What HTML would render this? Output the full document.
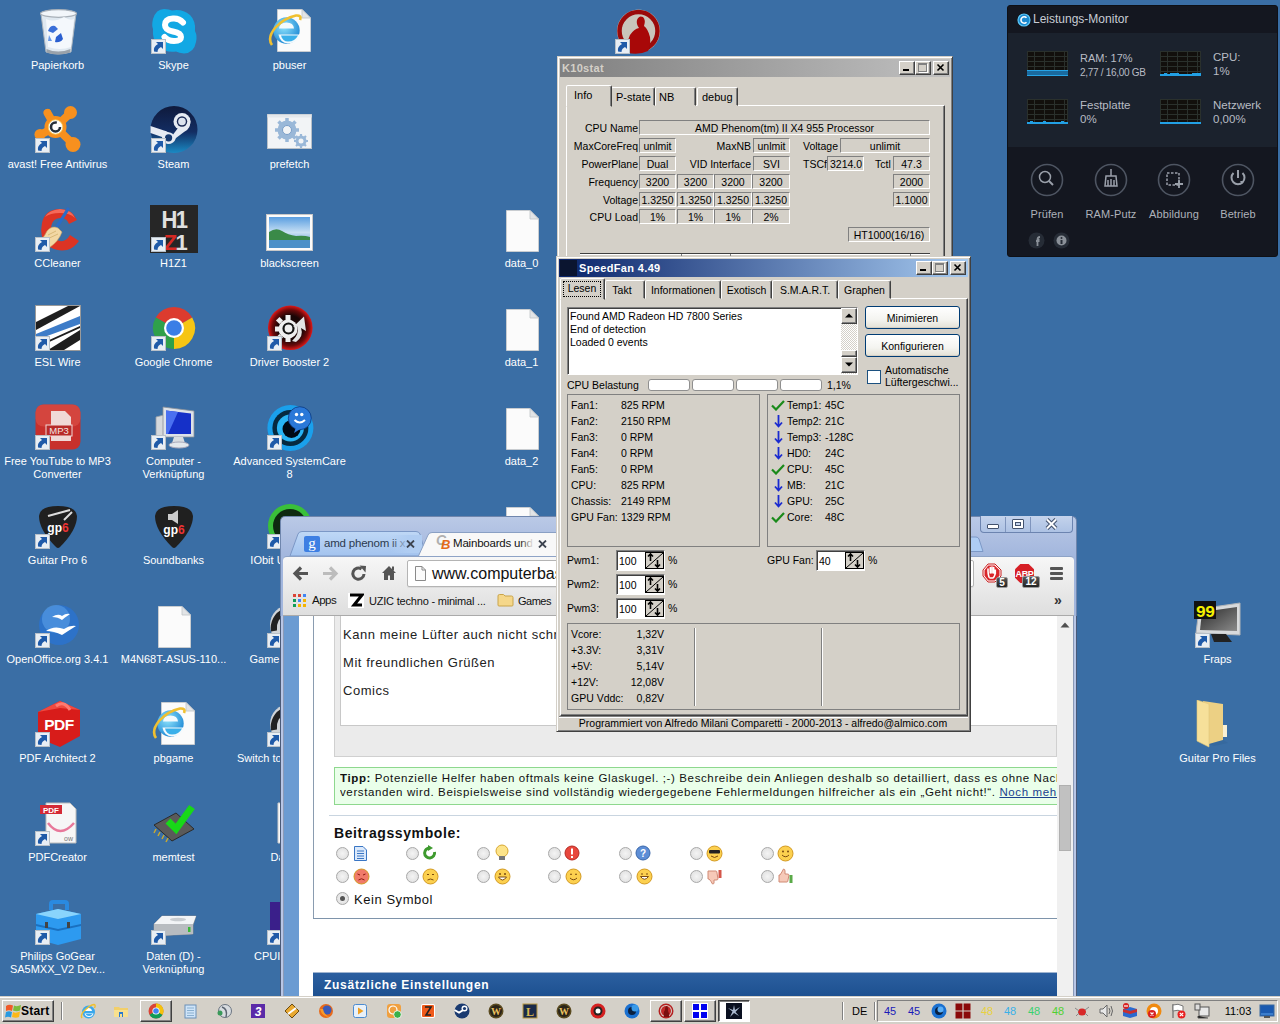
<!DOCTYPE html><html><head><meta charset="utf-8"><style>
*{box-sizing:border-box}
html,body{margin:0;padding:0}
body{width:1280px;height:1024px;overflow:hidden;position:relative;background:#3a6ea5;font-family:"Liberation Sans",sans-serif;font-size:11px;color:#000}
div,span,svg{position:absolute;white-space:nowrap}
.raised{background:#d4d0c8;border:1px solid;border-color:#fff #404040 #404040 #fff;box-shadow:inset -1px -1px 0 #808080}
.sunk{border:1px solid;border-color:#808080 #fff #fff #808080}
.sunk2{border:1px solid;border-color:#808080 #fff #fff #808080;box-shadow:inset 1px 1px 0 #404040}
.win{background:#d4d0c8;border:1px solid;border-color:#d4d0c8 #404040 #404040 #d4d0c8;box-shadow:inset 1px 1px 0 #fff, inset -1px -1px 0 #808080}
.tb{width:16px;height:14px}
.k{font-size:10.5px}
</style></head><body><svg style="left:33.5px;top:7px" width="48" height="48" viewBox="0 0 48 48"><path d="M7 7 Q24 3 42 7 L37 45 Q24 49 12 45Z" fill="#dfe8f0" stroke="#aab4be"/><ellipse cx="24.5" cy="6.5" rx="18" ry="3.8" fill="#f2f6fa" stroke="#a8b0b8" stroke-width="1.2"/><path d="M12 12 Q20 16 30 10 Q36 14 40 12 L37 40 Q26 44 14 40Z" fill="#f4f8fc"/><path d="M14 24 Q16 18 21 19 L24 22 L19 26Z" fill="#3a6fd8"/><path d="M22 30 L27 26 L29 32 Q26 36 21 35Z" fill="#2a5fd0"/><path d="M15 28 L18 34 L14 34Z" fill="#6a9ae8"/><path d="M12.5 42 Q24 47 36.5 42 L36 45.5 Q24 49.5 12.5 45.5Z" fill="#9aa2aa"/></svg><div style="left:-142.5px;width:400px;text-align:center;top:59.69px;font-size:11px;line-height:11px;color:#fff">Papierkorb</div><svg style="left:33.5px;top:106px" width="48" height="48" viewBox="0 0 48 48"><g stroke="#f7901e" stroke-width="8" stroke-linecap="round"><path d="M21.5 21 L36.5 7 M21.5 21 L39 38 M21.5 21 L6 29 M21.5 21 L13.5 7"/></g><g fill="#f7901e"><circle cx="21.5" cy="21" r="11"/><circle cx="36.5" cy="6.5" r="6.5"/><circle cx="39" cy="38.5" r="7.5"/><circle cx="6" cy="28.5" r="5.5"/><circle cx="13.5" cy="6.5" r="3.5"/></g><circle cx="21.5" cy="21" r="7.2" fill="#fff" stroke="#f8d060" stroke-width=".8"/><circle cx="21.5" cy="21" r="4.5" fill="none" stroke="#26303a" stroke-width="2.6" stroke-dasharray="22 6"/><g transform="translate(1,32)"><rect x="0.5" y="0.5" width="14" height="14" fill="#e8eef4" stroke="#b8c0c8"/><path d="M3 12.5 Q2 7.5 7 5 L5 3 H12 V10 L10 8 Q6.5 9.5 6.5 13Z" fill="#1f5aa8"/></g></svg><div style="left:-142.5px;width:400px;text-align:center;top:158.69px;font-size:11px;line-height:11px;color:#fff">avast! Free Antivirus</div><svg style="left:33.5px;top:205px" width="48" height="48" viewBox="0 0 48 48"><path d="M43 15 Q38 4 26 4 Q11 4 8 18 Q5 32 13 40 Q21 47 33 45 Q40 43 45 36 L36 30 Q32 37 26 36 Q17 35 17 25 Q17 13 27 13 Q33 13 35 19Z" fill="#dc3424"/><path d="M26 4 Q15 5 11 12 Q16 8 26 8 Q36 8 41 13 Q38 5 26 4Z" fill="#ff8070" opacity=".7"/><path d="M34 4 L21 25" stroke="#2a6cc8" stroke-width="3.2" stroke-linecap="round"/><path d="M13 26 Q18 20 24 23 L28 27 Q25 36 15 43 Q8 41 5 36 Q10 33 13 26Z" fill="#f2d8a4" stroke="#c8a060" stroke-width=".6"/><path d="M14 30 L22 26 M11 35 L24 29" stroke="#d8b878" stroke-width="1"/><g transform="translate(1,32)"><rect x="0.5" y="0.5" width="14" height="14" fill="#e8eef4" stroke="#b8c0c8"/><path d="M3 12.5 Q2 7.5 7 5 L5 3 H12 V10 L10 8 Q6.5 9.5 6.5 13Z" fill="#1f5aa8"/></g></svg><div style="left:-142.5px;width:400px;text-align:center;top:257.69px;font-size:11px;line-height:11px;color:#fff">CCleaner</div><svg style="left:33.5px;top:304px" width="48" height="48" viewBox="0 0 48 48"><rect x="1.5" y="1.5" width="45" height="45" fill="#fff" stroke="#9a9a9a"/><path d="M2 26 L46 2 H34 L2 18Z" fill="#1e1e1e"/><path d="M2 30 L46 12 V20 L2 36Z" fill="#3d7cc8"/><path d="M14 46 L46 26 V36 L30 46Z M2 42 L46 22 V24 L2 44Z" fill="#1e1e1e"/><g transform="translate(1,32)"><rect x="0.5" y="0.5" width="14" height="14" fill="#e8eef4" stroke="#b8c0c8"/><path d="M3 12.5 Q2 7.5 7 5 L5 3 H12 V10 L10 8 Q6.5 9.5 6.5 13Z" fill="#1f5aa8"/></g></svg><div style="left:-142.5px;width:400px;text-align:center;top:356.69px;font-size:11px;line-height:11px;color:#fff">ESL Wire</div><svg style="left:33.5px;top:403px" width="48" height="48" viewBox="0 0 48 48"><rect x="1.5" y="1.5" width="45" height="45" rx="8" fill="#c8302c"/><rect x="1.5" y="1.5" width="45" height="22" rx="8" fill="#e05a50" opacity=".5"/><path d="M17 8 H31 L37 14 V38 H17Z" fill="#f0d8d6"/><rect x="12" y="22" width="26" height="11" fill="#b82a28" stroke="#f0d8d6" stroke-width="1"/><text x="25" y="31" font-size="9.5" fill="#f4e4e2" text-anchor="middle" font-family="Liberation Sans">MP3</text><g transform="translate(1,32)"><rect x="0.5" y="0.5" width="14" height="14" fill="#e8eef4" stroke="#b8c0c8"/><path d="M3 12.5 Q2 7.5 7 5 L5 3 H12 V10 L10 8 Q6.5 9.5 6.5 13Z" fill="#1f5aa8"/></g></svg><div style="left:-142.5px;width:400px;text-align:center;top:455.69px;font-size:11px;line-height:11px;color:#fff">Free YouTube to MP3</div><div style="left:-142.5px;width:400px;text-align:center;top:468.69px;font-size:11px;line-height:11px;color:#fff">Converter</div><svg style="left:33.5px;top:502px" width="48" height="48" viewBox="0 0 48 48"><path d="M24 4 Q42 4 43 14 Q43 28 26 45 Q24 47 22 45 Q5 28 5 14 Q6 4 24 4Z" fill="#202020"/><text x="24" y="30" font-size="12" font-weight="bold" fill="#fff" text-anchor="middle" font-family="Liberation Sans">gp<tspan fill="#e33">6</tspan></text><path d="M14 14 L36 8 M30 18 L38 10" stroke="#ddd" stroke-width="2"/><g transform="translate(1,32)"><rect x="0.5" y="0.5" width="14" height="14" fill="#e8eef4" stroke="#b8c0c8"/><path d="M3 12.5 Q2 7.5 7 5 L5 3 H12 V10 L10 8 Q6.5 9.5 6.5 13Z" fill="#1f5aa8"/></g></svg><div style="left:-142.5px;width:400px;text-align:center;top:554.69px;font-size:11px;line-height:11px;color:#fff">Guitar Pro 6</div><svg style="left:33.5px;top:601px" width="48" height="48" viewBox="0 0 48 48"><circle cx="25" cy="24" r="20" fill="#2d72c8"/><circle cx="22" cy="18" r="14" fill="#5aa0e8" opacity=".6"/><path d="M12 30 Q20 24 30 28 Q36 24 42 25 Q34 30 28 34 Q20 30 12 30Z" fill="#fff"/><path d="M18 16 Q24 12 28 15 Q32 12 36 13 Q30 17 28 19 Q24 16 18 16Z" fill="#fff"/><g transform="translate(1,32)"><rect x="0.5" y="0.5" width="14" height="14" fill="#e8eef4" stroke="#b8c0c8"/><path d="M3 12.5 Q2 7.5 7 5 L5 3 H12 V10 L10 8 Q6.5 9.5 6.5 13Z" fill="#1f5aa8"/></g></svg><div style="left:-142.5px;width:400px;text-align:center;top:653.69px;font-size:11px;line-height:11px;color:#fff">OpenOffice.org 3.4.1</div><svg style="left:33.5px;top:700px" width="48" height="48" viewBox="0 0 48 48"><path d="M26 1 L46 10 V36 L26 47 L4 38 V12Z" fill="#d81c1a"/><path d="M4 12 L26 1 L46 10 L26 8Z" fill="#f04a40"/><path d="M22 6 Q30 0 36 10" stroke="#ff7a70" stroke-width="3" fill="none"/><text x="25" y="30" font-size="15.5" font-weight="bold" fill="#fff" text-anchor="middle" font-family="Liberation Sans" letter-spacing="-0.5">PDF</text><g transform="translate(1,32)"><rect x="0.5" y="0.5" width="14" height="14" fill="#e8eef4" stroke="#b8c0c8"/><path d="M3 12.5 Q2 7.5 7 5 L5 3 H12 V10 L10 8 Q6.5 9.5 6.5 13Z" fill="#1f5aa8"/></g></svg><div style="left:-142.5px;width:400px;text-align:center;top:752.69px;font-size:11px;line-height:11px;color:#fff">PDF Architect 2</div><svg style="left:33.5px;top:799px" width="48" height="48" viewBox="0 0 48 48"><path d="M12 4 H36 L42 10 V44 H12Z" fill="#f6f6f6" stroke="#bbb"/><rect x="6" y="6" width="22" height="9" fill="#d42a36"/><text x="17" y="14" font-size="8" fill="#fff" text-anchor="middle" font-weight="bold" font-family="Liberation Sans">PDF</text><path d="M14 24 Q26 40 40 24" stroke="#e8789a" stroke-width="2.5" fill="none"/><text x="30" y="42" font-size="7" fill="#777" font-family="Liberation Sans">ow</text><g transform="translate(1,32)"><rect x="0.5" y="0.5" width="14" height="14" fill="#e8eef4" stroke="#b8c0c8"/><path d="M3 12.5 Q2 7.5 7 5 L5 3 H12 V10 L10 8 Q6.5 9.5 6.5 13Z" fill="#1f5aa8"/></g></svg><div style="left:-142.5px;width:400px;text-align:center;top:851.69px;font-size:11px;line-height:11px;color:#fff">PDFCreator</div><svg style="left:33.5px;top:898px" width="48" height="48" viewBox="0 0 48 48"><path d="M15 12 V6 Q15 2 19 2 H31 Q35 2 35 6 V12 H31 V6 H19 V12Z" fill="#2a8ae0"/><path d="M2 16 L24 11 L47 16 V41 L24 47 L2 41Z" fill="#2d9af0"/><path d="M2 16 L24 11 L47 16 L24 21Z" fill="#8ad4fc"/><path d="M2 26 L24 31 L47 26 V28 L24 33 L2 28Z" fill="#1a70c0"/><rect x="11" y="24" width="3" height="6" fill="#444"/><rect x="33" y="24" width="3" height="6" fill="#444"/><g transform="translate(1,32)"><rect x="0.5" y="0.5" width="14" height="14" fill="#e8eef4" stroke="#b8c0c8"/><path d="M3 12.5 Q2 7.5 7 5 L5 3 H12 V10 L10 8 Q6.5 9.5 6.5 13Z" fill="#1f5aa8"/></g></svg><div style="left:-142.5px;width:400px;text-align:center;top:950.69px;font-size:11px;line-height:11px;color:#fff">Philips GoGear</div><div style="left:-142.5px;width:400px;text-align:center;top:963.69px;font-size:11px;line-height:11px;color:#fff">SA5MXX_V2 Dev...</div><svg style="left:149.5px;top:7px" width="48" height="48" viewBox="0 0 48 48"><path d="M14 2 Q19 2 22 3.5 Q32 1.5 40 8 Q46 14 45 24 Q47.5 29 46 35 Q44 46 34 46.5 Q29 46 26 44.5 Q15 46 8 39 Q2 32 3 22 Q1.5 18 3 12 Q6 2 14 2Z" fill="#12a8e4"/><path d="M33 15.5 Q29 11 23 11.5 Q15 12 15 18 Q15 23 23 24.5 Q31 26 31 30 Q31 34 24 34 Q18 34 14.5 30" stroke="#fff" stroke-width="6" fill="none" stroke-linecap="round"/><g transform="translate(1,32)"><rect x="0.5" y="0.5" width="14" height="14" fill="#e8eef4" stroke="#b8c0c8"/><path d="M3 12.5 Q2 7.5 7 5 L5 3 H12 V10 L10 8 Q6.5 9.5 6.5 13Z" fill="#1f5aa8"/></g></svg><div style="left:-26.5px;width:400px;text-align:center;top:59.69px;font-size:11px;line-height:11px;color:#fff">Skype</div><svg style="left:149.5px;top:106px" width="48" height="48" viewBox="0 0 48 48"><defs><linearGradient id="stg" x1="0" y1="0" x2="0" y2="1"><stop offset="0" stop-color="#0f1a3c"/><stop offset=".55" stop-color="#132d62"/><stop offset="1" stop-color="#1a8ac4"/></linearGradient></defs><circle cx="24" cy="23.5" r="23.5" fill="url(#stg)"/><path d="M0.5 20 L14 24.5 Q19 25.5 22 30 L28 22 Q26 12 33 8 L40 12 Q42 22 34 26 L26 32 Q24 38 18 38 Q12 37 12 31 L0.5 27Z" fill="#e6ebf3"/><circle cx="32" cy="15.5" r="8.5" fill="#e6ebf3"/><circle cx="32" cy="15.5" r="5.2" fill="#1b2a55"/><circle cx="32" cy="15.5" r="3.8" fill="#dce3ee"/><circle cx="18.6" cy="31.8" r="5.6" fill="#e6ebf3"/><circle cx="18.6" cy="31.8" r="3.6" fill="#163a70"/><g transform="translate(1,32)"><rect x="0.5" y="0.5" width="14" height="14" fill="#e8eef4" stroke="#b8c0c8"/><path d="M3 12.5 Q2 7.5 7 5 L5 3 H12 V10 L10 8 Q6.5 9.5 6.5 13Z" fill="#1f5aa8"/></g></svg><div style="left:-26.5px;width:400px;text-align:center;top:158.69px;font-size:11px;line-height:11px;color:#fff">Steam</div><svg style="left:149.5px;top:205px" width="48" height="48" viewBox="0 0 48 48"><rect x="0" y="0" width="48" height="48" fill="#262626"/><text x="24" y="22" font-size="22" font-weight="bold" fill="#e0e0e0" text-anchor="middle" font-family="Liberation Sans" letter-spacing="-1.5" transform="scale(1,1.05)">H1</text><text x="25" y="45" font-size="22" font-weight="bold" fill="#d42a24" text-anchor="middle" font-family="Liberation Sans" letter-spacing="-1.5">Z<tspan fill="#e0e0e0">1</tspan></text><g transform="translate(1,32)"><rect x="0.5" y="0.5" width="14" height="14" fill="#e8eef4" stroke="#b8c0c8"/><path d="M3 12.5 Q2 7.5 7 5 L5 3 H12 V10 L10 8 Q6.5 9.5 6.5 13Z" fill="#1f5aa8"/></g></svg><div style="left:-26.5px;width:400px;text-align:center;top:257.69px;font-size:11px;line-height:11px;color:#fff">H1Z1</div><svg style="left:149.5px;top:304px" width="48" height="48" viewBox="0 0 48 48"><path d="M24 24 L5.8 13.5 A21 21 0 0 1 42.2 13.5Z" fill="#dc3b2e"/><path d="M24 24 L42.2 13.5 A21 21 0 0 1 24 45Z" fill="#f6c514"/><path d="M24 24 L24 45 A21 21 0 0 1 5.8 13.5Z" fill="#2fa04a"/><circle cx="24" cy="24" r="10" fill="#fff"/><circle cx="24" cy="24" r="7.8" fill="#3a7ee6"/><g transform="translate(1,32)"><rect x="0.5" y="0.5" width="14" height="14" fill="#e8eef4" stroke="#b8c0c8"/><path d="M3 12.5 Q2 7.5 7 5 L5 3 H12 V10 L10 8 Q6.5 9.5 6.5 13Z" fill="#1f5aa8"/></g></svg><div style="left:-26.5px;width:400px;text-align:center;top:356.69px;font-size:11px;line-height:11px;color:#fff">Google Chrome</div><svg style="left:149.5px;top:403px" width="48" height="48" viewBox="0 0 48 48"><path d="M6 14 L14 12 V34 L6 36Z" fill="#d4d8dc" stroke="#9aa0a6" stroke-width=".8"/><path d="M13 4 L44 8 V34 L13 34Z" fill="#dde2e8" stroke="#8a9098" stroke-width=".8"/><path d="M16 7.5 L41 10.5 V31 L16 31Z" fill="#1530c8"/><path d="M16 7.5 L28 9 L18 31 H16Z" fill="#4a70f0"/><path d="M24 34 H33 L35 40 H22Z" fill="#d8dce0"/><ellipse cx="29" cy="42" rx="10" ry="3" fill="#e4e8ec" stroke="#aab"/><g transform="translate(1,32)"><rect x="0.5" y="0.5" width="14" height="14" fill="#e8eef4" stroke="#b8c0c8"/><path d="M3 12.5 Q2 7.5 7 5 L5 3 H12 V10 L10 8 Q6.5 9.5 6.5 13Z" fill="#1f5aa8"/></g></svg><div style="left:-26.5px;width:400px;text-align:center;top:455.69px;font-size:11px;line-height:11px;color:#fff">Computer -</div><div style="left:-26.5px;width:400px;text-align:center;top:468.69px;font-size:11px;line-height:11px;color:#fff">Verknüpfung</div><svg style="left:149.5px;top:502px" width="48" height="48" viewBox="0 0 48 48"><path d="M24 4 Q42 4 43 14 Q43 28 26 45 Q24 47 22 45 Q5 28 5 14 Q6 4 24 4Z" fill="#202020"/><text x="24" y="32" font-size="12" font-weight="bold" fill="#fff" text-anchor="middle" font-family="Liberation Sans">gp<tspan fill="#e33">6</tspan></text><path d="M18 12 H22 L28 8 V22 L22 18 H18Z" fill="#ccc"/></svg><div style="left:-26.5px;width:400px;text-align:center;top:554.69px;font-size:11px;line-height:11px;color:#fff">Soundbanks</div><svg style="left:149.5px;top:601px" width="48" height="48" viewBox="0 0 48 48"><path d="M8.5 5.5 H32 L40.5 14 V46.5 H8.5Z" fill="#fbfbfb" stroke="#c8ccd0"/><path d="M32 5.5 V14 H40.5Z" fill="#e2e4e6" stroke="#c0c4c8" stroke-width=".8"/></svg><div style="left:-26.5px;width:400px;text-align:center;top:653.69px;font-size:11px;line-height:11px;color:#fff">M4N68T-ASUS-110...</div><svg style="left:149.5px;top:700px" width="48" height="48" viewBox="0 0 48 48"><path d="M11.5 2.5 H36 L44.5 11 V44.5 H11.5Z" fill="#fbfbfb" stroke="#c8ccd0"/><path d="M36 2.5 V11 H44.5Z" fill="#e2e4e6" stroke="#c0c4c8" stroke-width=".8"/><defs><radialGradient id="ieg" cx=".4" cy=".35" r=".7"><stop offset="0" stop-color="#8fe4fc"/><stop offset="1" stop-color="#1b86d4"/></radialGradient></defs><circle cx="20.5" cy="23.5" r="13.2" fill="url(#ieg)"/><path d="M13 21.5 Q13.5 15.5 20.5 15.5 Q27.5 15.5 28 21.5Z" fill="#f4fafd"/><path d="M12.5 27.5 H34 Q32 36 22 36.5 Q14 36 12.5 27.5Z" fill="#f4fafd"/><path d="M15 28.5 H32 Q29 34.5 22 34.5 Q16.5 34.5 15 28.5Z" fill="#3ab0ea"/><path d="M6 38 Q1 31 9 21 Q18 11 30 8.5 Q36 8 34 13" stroke="#f0c030" stroke-width="2.6" fill="none"/></svg><div style="left:-26.5px;width:400px;text-align:center;top:752.69px;font-size:11px;line-height:11px;color:#fff">pbgame</div><svg style="left:149.5px;top:799px" width="48" height="48" viewBox="0 0 48 48"><path d="M4 26 L26 14 L44 30 L22 42Z" fill="#5a5a5a" stroke="#2a2a2a"/><path d="M6 30 L4 34 M10 33 L8 37 M14 36 L12 40 M18 39 L16 43" stroke="#c8a830" stroke-width="1.5"/><path d="M18 22 L26 30 L42 8" stroke="#18d818" stroke-width="7" fill="none"/></svg><div style="left:-26.5px;width:400px;text-align:center;top:851.69px;font-size:11px;line-height:11px;color:#fff">memtest</div><svg style="left:149.5px;top:898px" width="48" height="48" viewBox="0 0 48 48"><path d="M4 26 L12 18 H46 L43 27 V36 L4 38Z" fill="#e0e2e4" stroke="#8a8e92" stroke-width=".8"/><path d="M4 26 H43 V36 L4 38Z" fill="#b8bcc0"/><path d="M12 18 H46 L43 26 H4Z" fill="#f2f4f6"/><ellipse cx="28" cy="21.5" rx="8" ry="1.8" fill="#c8ccd0"/><rect x="38" y="29" width="2.5" height="5" fill="#3ab83a"/><g transform="translate(1,32)"><rect x="0.5" y="0.5" width="14" height="14" fill="#e8eef4" stroke="#b8c0c8"/><path d="M3 12.5 Q2 7.5 7 5 L5 3 H12 V10 L10 8 Q6.5 9.5 6.5 13Z" fill="#1f5aa8"/></g></svg><div style="left:-26.5px;width:400px;text-align:center;top:950.69px;font-size:11px;line-height:11px;color:#fff">Daten (D) -</div><div style="left:-26.5px;width:400px;text-align:center;top:963.69px;font-size:11px;line-height:11px;color:#fff">Verknüpfung</div><svg style="left:265.5px;top:7px" width="48" height="48" viewBox="0 0 48 48"><path d="M11.5 2.5 H36 L44.5 11 V44.5 H11.5Z" fill="#fbfbfb" stroke="#c8ccd0"/><path d="M36 2.5 V11 H44.5Z" fill="#e2e4e6" stroke="#c0c4c8" stroke-width=".8"/><defs><radialGradient id="ieg" cx=".4" cy=".35" r=".7"><stop offset="0" stop-color="#8fe4fc"/><stop offset="1" stop-color="#1b86d4"/></radialGradient></defs><circle cx="20.5" cy="23.5" r="13.2" fill="url(#ieg)"/><path d="M13 21.5 Q13.5 15.5 20.5 15.5 Q27.5 15.5 28 21.5Z" fill="#f4fafd"/><path d="M12.5 27.5 H34 Q32 36 22 36.5 Q14 36 12.5 27.5Z" fill="#f4fafd"/><path d="M15 28.5 H32 Q29 34.5 22 34.5 Q16.5 34.5 15 28.5Z" fill="#3ab0ea"/><path d="M6 38 Q1 31 9 21 Q18 11 30 8.5 Q36 8 34 13" stroke="#f0c030" stroke-width="2.6" fill="none"/></svg><div style="left:89.5px;width:400px;text-align:center;top:59.69px;font-size:11px;line-height:11px;color:#fff">pbuser</div><svg style="left:265.5px;top:106px" width="48" height="48" viewBox="0 0 48 48"><rect x="1.5" y="8.5" width="44" height="34" fill="#f2f4f6" stroke="#b8c0c8"/><rect x="1.5" y="8.5" width="44" height="3" fill="#e4e8ec"/><g fill="#9ab8d8"><circle cx="21" cy="24" r="9.5"/><circle cx="35" cy="35" r="5.5"/></g><g stroke="#9ab8d8" stroke-width="3.5"><path d="M21 12 V36 M9 24 H33 M12.5 15.5 L29.5 32.5 M29.5 15.5 L12.5 32.5"/><path d="M35 28 V42 M28 35 H42 M30 30 L40 40 M40 30 L30 40" stroke-width="2.2"/></g><circle cx="21" cy="24" r="4.5" fill="#f2f4f6" stroke="#7a9ec8"/><circle cx="35" cy="35" r="2.5" fill="#f2f4f6"/></svg><div style="left:89.5px;width:400px;text-align:center;top:158.69px;font-size:11px;line-height:11px;color:#fff">prefetch</div><svg style="left:265.5px;top:205px" width="48" height="48" viewBox="0 0 48 48"><rect x="0.5" y="9.5" width="46" height="36" fill="#fbfbfb" stroke="#c8c8c8"/><defs><linearGradient id="bsg" x1="0" y1="0" x2="0" y2="1"><stop offset="0" stop-color="#5a9ee0"/><stop offset=".5" stop-color="#c8e0f4"/><stop offset="1" stop-color="#4a8ad0"/></linearGradient></defs><rect x="3" y="12" width="41" height="31" fill="url(#bsg)"/><path d="M3 27 Q10 22 16 26 Q22 30 30 31 Q38 30 44 32 V35 H3Z" fill="#3a8a48"/><path d="M3 35 H44 V43 H3Z" fill="#4c90c8"/></svg><div style="left:89.5px;width:400px;text-align:center;top:257.69px;font-size:11px;line-height:11px;color:#fff">blackscreen</div><svg style="left:265.5px;top:304px" width="48" height="48" viewBox="0 0 48 48"><defs><radialGradient id="dbg" cx=".5" cy=".5" r=".5"><stop offset=".55" stop-color="#1a0606"/><stop offset=".8" stop-color="#6a0a0a"/><stop offset="1" stop-color="#e01818"/></radialGradient></defs><circle cx="24.3" cy="23.8" r="22.3" fill="url(#dbg)"/><g fill="#eeeeee"><circle cx="22" cy="25" r="9.5"/><rect x="19.5" y="11" width="5" height="6"/><rect x="9" y="22.5" width="6" height="5"/><rect x="19.5" y="33" width="5" height="5"/><rect x="11" y="14" width="5" height="5" transform="rotate(45 13.5 16.5)"/><rect x="11" y="31" width="5" height="5" transform="rotate(45 13.5 33.5)"/></g><circle cx="22.5" cy="24.5" r="5" fill="none" stroke="#111" stroke-width="2.2"/><path d="M26 37 Q34 30 31 22 L27 23 L38 12.5 L40 27 L35 24 Q38 32 30 38Z" fill="#e4e4e4"/><g transform="translate(1,32)"><rect x="0.5" y="0.5" width="14" height="14" fill="#e8eef4" stroke="#b8c0c8"/><path d="M3 12.5 Q2 7.5 7 5 L5 3 H12 V10 L10 8 Q6.5 9.5 6.5 13Z" fill="#1f5aa8"/></g></svg><div style="left:89.5px;width:400px;text-align:center;top:356.69px;font-size:11px;line-height:11px;color:#fff">Driver Booster 2</div><svg style="left:265.5px;top:403px" width="48" height="48" viewBox="0 0 48 48"><circle cx="24.4" cy="25" r="23" fill="#1aa0ec"/><circle cx="24.4" cy="25" r="18" fill="#062a40"/><circle cx="24.4" cy="25" r="13.5" fill="#28b4f4"/><circle cx="25.5" cy="26" r="9" fill="#000a14"/><circle cx="33.8" cy="15.2" r="11.5" fill="#2a78d8" stroke="#0a3a80" stroke-width=".8"/><path d="M30 24 L28 30 L35 25.5Z" fill="#2a78d8"/><circle cx="30.5" cy="11.5" r="1.7" fill="#fff"/><circle cx="35.8" cy="11.5" r="1.7" fill="#fff"/><path d="M28.5 17 Q33.5 22 39 17" stroke="#fff" stroke-width="2" fill="none"/><g transform="translate(1,32)"><rect x="0.5" y="0.5" width="14" height="14" fill="#e8eef4" stroke="#b8c0c8"/><path d="M3 12.5 Q2 7.5 7 5 L5 3 H12 V10 L10 8 Q6.5 9.5 6.5 13Z" fill="#1f5aa8"/></g></svg><div style="left:89.5px;width:400px;text-align:center;top:455.69px;font-size:11px;line-height:11px;color:#fff">Advanced SystemCare</div><div style="left:89.5px;width:400px;text-align:center;top:468.69px;font-size:11px;line-height:11px;color:#fff">8</div><svg style="left:265.5px;top:502px" width="48" height="48" viewBox="0 0 48 48"><circle cx="24" cy="24" r="22" fill="#3ac03a"/><circle cx="24" cy="24" r="17" fill="#0e2a10"/><g transform="translate(1,32)"><rect x="0.5" y="0.5" width="14" height="14" fill="#e8eef4" stroke="#b8c0c8"/><path d="M3 12.5 Q2 7.5 7 5 L5 3 H12 V10 L10 8 Q6.5 9.5 6.5 13Z" fill="#1f5aa8"/></g></svg><div style="left:89.5px;width:400px;text-align:center;top:554.69px;font-size:11px;line-height:11px;color:#fff">IObit Uninstaller</div><svg style="left:265.5px;top:601px" width="48" height="48" viewBox="0 0 48 48"><circle cx="24" cy="24" r="20" fill="#d0d4d8"/><path d="M8 30 A18 18 0 0 1 40 16" stroke="#222" stroke-width="6" fill="none"/><circle cx="30" cy="34" r="8" fill="#e03030"/><g transform="translate(1,32)"><rect x="0.5" y="0.5" width="14" height="14" fill="#e8eef4" stroke="#b8c0c8"/><path d="M3 12.5 Q2 7.5 7 5 L5 3 H12 V10 L10 8 Q6.5 9.5 6.5 13Z" fill="#1f5aa8"/></g></svg><div style="left:89.5px;width:400px;text-align:center;top:653.69px;font-size:11px;line-height:11px;color:#fff">Game Booster 3</div><svg style="left:265.5px;top:700px" width="48" height="48" viewBox="0 0 48 48"><circle cx="24" cy="24" r="20" fill="#d0d4d8"/><path d="M8 30 A18 18 0 0 1 40 16" stroke="#222" stroke-width="6" fill="none"/><circle cx="30" cy="34" r="8" fill="#e03030"/><g transform="translate(1,32)"><rect x="0.5" y="0.5" width="14" height="14" fill="#e8eef4" stroke="#b8c0c8"/><path d="M3 12.5 Q2 7.5 7 5 L5 3 H12 V10 L10 8 Q6.5 9.5 6.5 13Z" fill="#1f5aa8"/></g></svg><div style="left:89.5px;width:400px;text-align:center;top:752.69px;font-size:11px;line-height:11px;color:#fff">Switch to Gamemode</div><svg style="left:265.5px;top:799px" width="48" height="48" viewBox="0 0 48 48"><path d="M12 4 H36 V44 H12Z" fill="#fafafa" stroke="#ccc"/><path d="M16 10 H32 M16 16 H32 M16 22 H32 M16 28 H32" stroke="#ddd"/></svg><div style="left:89.5px;width:400px;text-align:center;top:851.69px;font-size:11px;line-height:11px;color:#fff">Dateien</div><svg style="left:265.5px;top:898px" width="48" height="48" viewBox="0 0 48 48"><rect x="4" y="4" width="40" height="40" fill="#3a1f8a"/><path d="M14 12 H34 V40 H14Z" fill="#e8e0ff" opacity=".8"/><path d="M18 16 H30 V36 H18Z" fill="#3a1f8a"/><g transform="translate(1,32)"><rect x="0.5" y="0.5" width="14" height="14" fill="#e8eef4" stroke="#b8c0c8"/><path d="M3 12.5 Q2 7.5 7 5 L5 3 H12 V10 L10 8 Q6.5 9.5 6.5 13Z" fill="#1f5aa8"/></g></svg><div style="left:89.5px;width:400px;text-align:center;top:950.69px;font-size:11px;line-height:11px;color:#fff">CPUID CPU-Z</div><svg style="left:497.5px;top:205px" width="48" height="48" viewBox="0 0 48 48"><path d="M8.5 5.5 H32 L40.5 14 V46.5 H8.5Z" fill="#fbfbfb" stroke="#c8ccd0"/><path d="M32 5.5 V14 H40.5Z" fill="#e2e4e6" stroke="#c0c4c8" stroke-width=".8"/></svg><div style="left:321.5px;width:400px;text-align:center;top:257.69px;font-size:11px;line-height:11px;color:#fff">data_0</div><svg style="left:497.5px;top:304px" width="48" height="48" viewBox="0 0 48 48"><path d="M8.5 5.5 H32 L40.5 14 V46.5 H8.5Z" fill="#fbfbfb" stroke="#c8ccd0"/><path d="M32 5.5 V14 H40.5Z" fill="#e2e4e6" stroke="#c0c4c8" stroke-width=".8"/></svg><div style="left:321.5px;width:400px;text-align:center;top:356.69px;font-size:11px;line-height:11px;color:#fff">data_1</div><svg style="left:497.5px;top:403px" width="48" height="48" viewBox="0 0 48 48"><path d="M8.5 5.5 H32 L40.5 14 V46.5 H8.5Z" fill="#fbfbfb" stroke="#c8ccd0"/><path d="M32 5.5 V14 H40.5Z" fill="#e2e4e6" stroke="#c0c4c8" stroke-width=".8"/></svg><div style="left:321.5px;width:400px;text-align:center;top:455.69px;font-size:11px;line-height:11px;color:#fff">data_2</div><svg style="left:497.5px;top:502px" width="48" height="48" viewBox="0 0 48 48"><path d="M8.5 5.5 H32 L40.5 14 V46.5 H8.5Z" fill="#fbfbfb" stroke="#c8ccd0"/><path d="M32 5.5 V14 H40.5Z" fill="#e2e4e6" stroke="#c0c4c8" stroke-width=".8"/></svg><div style="left:321.5px;width:400px;text-align:center;top:554.69px;font-size:11px;line-height:11px;color:#fff">data_3</div><svg style="left:613.5px;top:7px" width="48" height="48" viewBox="0 0 48 48"><circle cx="24.5" cy="24" r="21.5" fill="#c9c5bb"/><circle cx="24.5" cy="24" r="19" fill="none" stroke="#9a0a0a" stroke-width="4.5"/><path d="M14 46 Q12 36 16 28 Q20 22 25 21 Q22 17 23 13 Q25 8 29 10 Q32 13 30 19 Q34 22 36 30 Q37 38 34 44 Q26 48 14 46Z" fill="#a80808"/><g transform="translate(1,32)"><rect x="0.5" y="0.5" width="14" height="14" fill="#e8eef4" stroke="#b8c0c8"/><path d="M3 12.5 Q2 7.5 7 5 L5 3 H12 V10 L10 8 Q6.5 9.5 6.5 13Z" fill="#1f5aa8"/></g></svg><div style="left:437.5px;width:400px;text-align:center;top:59.69px;font-size:11px;line-height:11px;color:#fff">K10stat</div><svg style="left:1193.5px;top:601px" width="48" height="48" viewBox="0 0 48 48"><defs><linearGradient id="frg" x1="0" y1="0" x2="1" y2="1"><stop offset="0" stop-color="#2a2a2a"/><stop offset="1" stop-color="#8a8a8a"/></linearGradient></defs><path d="M5 8 L46 2 V34 L2 32Z" fill="#d8dadc" stroke="#b0b4b8"/><path d="M8 11 L43 6 V30 L6 29Z" fill="url(#frg)"/><path d="M17 33 H32 L38 41 H20Z" fill="#222"/><rect x="0" y="0" width="22" height="18" fill="#111"/><text x="11" y="15.5" font-size="17" font-weight="bold" fill="#f4f000" text-anchor="middle" font-family="Liberation Mono" letter-spacing="-1">99</text><g transform="translate(1,32)"><rect x="0.5" y="0.5" width="14" height="14" fill="#e8eef4" stroke="#b8c0c8"/><path d="M3 12.5 Q2 7.5 7 5 L5 3 H12 V10 L10 8 Q6.5 9.5 6.5 13Z" fill="#1f5aa8"/></g></svg><div style="left:1017.5px;width:400px;text-align:center;top:653.69px;font-size:11px;line-height:11px;color:#fff">Fraps</div><svg style="left:1193.5px;top:700px" width="48" height="48" viewBox="0 0 48 48"><path d="M9 1 L29 4 V40 L15 44Z" fill="#ecd084"/><path d="M29 25 H33 V37 H29Z" fill="#f8f0d4"/><path d="M3 0 L15 4 V47 L3 41Z" fill="#f6e09a" stroke="#e2c878" stroke-width=".6"/><path d="M15 44 L29 40 L34 43 L20 46Z" fill="#2a5a8a" opacity=".25"/></svg><div style="left:1017.5px;width:400px;text-align:center;top:752.69px;font-size:11px;line-height:11px;color:#fff">Guitar Pro Files</div><div style="left:280px;top:516px;width:797px;height:500px;background:linear-gradient(#bac9e6,#a2b6dd 40px,#a2b6dd);border:1px solid #6f86ad;border-radius:5px 5px 0 0;border-bottom:none"></div><div style="left:980px;top:516px;width:93px;height:17px;background:linear-gradient(#c4d3ec,#adc2e4);border:1px solid #6c84b0;border-top:none;border-radius:0 0 4px 4px"></div><div style="left:1005px;top:517px;width:1px;height:15px;background:#7f95bd"></div><div style="left:1030px;top:517px;width:1px;height:15px;background:#7f95bd"></div><div style="left:987px;top:524px;width:12px;height:5px;border:1px solid #42526e;background:#fff;border-radius:1px"></div><div style="left:1012px;top:519px;width:12px;height:10px;border:1px solid #42526e;background:#fff;border-radius:1px"></div><div style="left:1015px;top:522px;width:6px;height:4px;border:1px solid #42526e;background:#c4d3ec"></div><svg style="left:1045px;top:518px" width="13" height="12"><path d="M2 1.5 L11 10.5 M11 1.5 L2 10.5" stroke="#42526e" stroke-width="4"/><path d="M2 1.5 L11 10.5 M11 1.5 L2 10.5" stroke="#fff" stroke-width="2"/></svg><svg style="left:950px;top:536px" width="34" height="17"><path d="M1 1 H26 Q28 1 29 3 L33 15.5 H8 Z" fill="#aecdf4" stroke="#7c98c6"/></svg><svg style="left:288px;top:530px" width="140" height="27"><path d="M2 26 L10 4 Q11 1.5 14 1.5 L128 1.5 Q131 1.5 132 4 L138 26Z" fill="url(#gt)" stroke="#7c98c6" stroke-width="1"/><defs><linearGradient id="gt" x1="0" y1="0" x2="0" y2="1"><stop offset="0" stop-color="#bfd8f6"/><stop offset="1" stop-color="#a3c3ee"/></linearGradient></defs></svg><div style="left:304px;top:536px;width:16px;height:16px;background:#3d7fe3;border-radius:2px"></div><div style="left:112px;width:400px;text-align:center;top:536.30px;font-size:15px;line-height:15px;font-family:'Liberation Serif',serif;color:#fff">g</div><div style="left:324px;top:538.27px;font-size:11.5px;line-height:11.5px;color:#2c3a4f;letter-spacing:-0.2px">amd phenom ii x</div><div style="left:390px;top:535px;width:32px;height:18px;background:linear-gradient(90deg,rgba(177,206,243,0),#b0cdf2 60%)"></div><svg style="left:406px;top:540px" width="9" height="8"><path d="M1 0.5 L8 7.5 M8 0.5 L1 7.5" stroke="#3d4450" stroke-width="1.8"/></svg><svg style="left:418px;top:531px" width="145" height="27"><path d="M0 26 L10 4 Q11 1.5 14 1.5 L145 1.5 L145 26Z" fill="#f8f8f8" stroke="#8aa0c4" stroke-width="1"/></svg><div style="left:436px;top:535px;width:16px;height:16px;"><span style="left:0;top:-3px;font:italic bold 14px Liberation Sans;color:#b0b0b0">C</span><span style="left:5px;top:2px;font:italic bold 13px Liberation Sans;color:#e56a1a">B</span></div><div style="left:453px;top:538.27px;font-size:11.5px;line-height:11.5px;color:#111;letter-spacing:-0.2px">Mainboards und</div><div style="left:520px;top:535px;width:20px;height:18px;background:linear-gradient(90deg,rgba(248,248,248,0),#f8f8f8 70%)"></div><svg style="left:538px;top:540px" width="9" height="8"><path d="M1 0.5 L8 7.5 M8 0.5 L1 7.5" stroke="#3d4450" stroke-width="1.8"/></svg><div style="left:283px;top:556px;width:791px;height:60px;background:linear-gradient(#f7f7f7,#e8e8e8 34px,#dedede);border-radius:4px 4px 0 0;border-top:1px solid #8ea3c6"></div><svg style="left:292px;top:565px" width="18" height="17"><path d="M16 8.5 H5 M9 2.5 L3 8.5 L9 14.5" stroke="#555" stroke-width="3.2" fill="none" stroke-linejoin="miter"/></svg><svg style="left:321px;top:565px" width="18" height="17"><path d="M2 8.5 H13 M9 2.5 L15 8.5 L9 14.5" stroke="#bcbcbc" stroke-width="3.2" fill="none"/></svg><svg style="left:350px;top:565px" width="18" height="17"><path d="M14 9 A5.6 5.6 0 1 1 11.5 4" stroke="#555" stroke-width="3" fill="none"/><path d="M9.5 0.5 L16 1 L15.5 7.5Z" fill="#555"/></svg><svg style="left:381px;top:565px" width="16" height="16"><path d="M8 1 L1 8 H3 V15 H7 V10.5 H9 V15 H13 V8 H15Z" fill="#555"/><rect x="11" y="1.5" width="2" height="4" fill="#555"/></svg><div style="left:407px;top:560px;width:567px;height:27px;background:#fff;border:1px solid #b4b4b4;border-radius:2px;box-shadow:0 1px 0 rgba(0,0,0,.06)"></div><svg style="left:414px;top:565px" width="13" height="17"><path d="M1.5 1.5 H8 L11.5 5 V15.5 H1.5Z M8 1.5 V5 H11.5" stroke="#8a8a8a" fill="#fbfbfb" stroke-width="1"/></svg><div style="left:432px;top:566.46px;font-size:16px;line-height:16px;color:#111">www.computerbase.de/forum/newreply.php</div><svg style="left:982px;top:563px" width="20" height="20"><path d="M6 1 H13 L19 7 V13 L13 19 H6 L1 13 V7Z" fill="#fff" stroke="#c81e1e" stroke-width="1"/><path d="M6.3 2.5 H12.7 L17.5 7.3 V12.7 L12.7 17.5 H6.3 L2.5 12.7 V7.3Z" fill="#d9252a"/><path d="M7 14 Q6 11 6 8 V6 M8.3 10 V4.5 M10 10 V4 M11.7 10 V4.5 M13.3 11 V6.5 Q13.5 13 11 15 H8" stroke="#fff" stroke-width="1.6" fill="none" stroke-linecap="round"/></svg><div style="left:996px;top:577px;width:12px;height:11px;background:linear-gradient(#555,#222);border-radius:2px;border:1px solid #999;color:#fff;font:bold 10px Liberation Sans;line-height:9px;text-align:center">5</div><svg style="left:1014px;top:563px" width="21" height="21"><path d="M6.3 1 H14.7 L20 6.3 V14.7 L14.7 20 H6.3 L1 14.7 V6.3Z" fill="#d61f26"/></svg><div style="left:824.5px;width:400px;text-align:center;top:570.38px;font-size:9px;line-height:9px;color:#fff;font-weight:bold;letter-spacing:-0.4px">ABP</div><div style="left:1022px;top:576px;width:18px;height:12px;background:linear-gradient(#555,#222);border-radius:2px;border:1px solid #999;color:#fff;font:bold 10px Liberation Sans;line-height:10px;text-align:center">12</div><div style="left:1050px;top:567px;width:13px;height:3px;background:#555;border-radius:1px"></div><div style="left:1050px;top:572px;width:13px;height:3px;background:#555;border-radius:1px"></div><div style="left:1050px;top:577px;width:13px;height:3px;background:#555;border-radius:1px"></div><div style="left:293px;top:594px;width:3px;height:3px;background:#db4437"></div><div style="left:298px;top:594px;width:3px;height:3px;background:#db4437"></div><div style="left:303px;top:594px;width:3px;height:3px;background:#4285f4"></div><div style="left:293px;top:599px;width:3px;height:3px;background:#0f9d58"></div><div style="left:298px;top:599px;width:3px;height:3px;background:#4285f4"></div><div style="left:303px;top:599px;width:3px;height:3px;background:#f4b400"></div><div style="left:293px;top:604px;width:3px;height:3px;background:#0f9d58"></div><div style="left:298px;top:604px;width:3px;height:3px;background:#f4b400"></div><div style="left:303px;top:604px;width:3px;height:3px;background:#f4b400"></div><div style="left:312px;top:595.27px;font-size:11.5px;line-height:11.5px;color:#111;letter-spacing:-0.5px">Apps</div><div style="left:348px;top:593px;width:16px;height:15px;background:#fff"><svg width="16" height="15"><path d="M2 2 H14 L6 12 H14 M2 12" stroke="#000" stroke-width="3" fill="none"/></svg></div><div style="left:369px;top:595.69px;font-size:11px;line-height:11px;color:#111;letter-spacing:-0.2px">UZIC techno - minimal ...</div><svg style="left:497px;top:593px" width="17" height="14"><path d="M1 3 Q1 1.5 2.5 1.5 H6.5 L8 3 H14.5 Q16 3 16 4.5 V12 Q16 13 15 13 H2 Q1 13 1 12Z" fill="#f5d78a" stroke="#c9a44a"/></svg><div style="left:518px;top:595.69px;font-size:11px;line-height:11px;color:#111;letter-spacing:-0.5px">Games</div><div style="left:1054px;top:593.15px;font-size:14px;line-height:14px;color:#333;font-weight:bold">»</div><div style="left:283px;top:615px;width:791px;height:1px;background:#aaa"></div><div style="left:284px;top:616px;width:789px;height:400px;background:#fff"></div><div style="left:284px;top:616px;width:15px;height:400px;background:#6b9bd2"></div><div style="left:313px;top:616px;width:1px;height:303px;background:#8a9cb0"></div><div style="left:334px;top:616px;width:723px;height:141px;background:#ebebeb;border:1px solid #d0d0d0;border-top:none"></div><div style="left:340px;top:616px;width:717px;height:110px;background:#fff;border:1px solid #c8c8c8;border-top:none;border-right:none"></div><div style="left:343px;top:628.00px;font-size:13px;line-height:13px;font-family:'Liberation Sans',sans-serif;color:#222;letter-spacing:0.55px">Kann meine Lüfter auch nicht schreiben lassen</div><div style="left:343px;top:656.00px;font-size:13px;line-height:13px;font-family:'Liberation Sans',sans-serif;color:#222;letter-spacing:0.55px">Mit freundlichen Grüßen</div><div style="left:343px;top:684.00px;font-size:13px;line-height:13px;font-family:'Liberation Sans',sans-serif;color:#222;letter-spacing:0.55px">Comics</div><div style="left:334px;top:767px;width:723px;height:38px;background:#eaffea;border:1px solid #8ed88e;border-right:none"></div><div style="left:340px;top:773.27px;font-size:11.5px;line-height:11.5px;color:#111;letter-spacing:0.62px;width:717px;overflow:hidden"><b>Tipp:</b> Potenzielle Helfer haben oftmals keine Glaskugel. ;-) Beschreibe dein Anliegen deshalb so detailliert, dass es ohne Nachfragen</div><div style="left:340px;top:787.27px;font-size:11.5px;line-height:11.5px;color:#111;letter-spacing:0.62px;width:717px;overflow:hidden">verstanden wird. Beispielsweise sind vollständig wiedergegebene Fehlermeldungen hilfreicher als ein „Geht nicht!“. <span style="position:static;color:#1a3f8f;text-decoration:underline">Noch mehr Tipps</span></div><div style="left:329px;top:815px;width:728px;height:1px;background:#c9d5e0"></div><div style="left:334px;top:826.15px;font-size:14px;line-height:14px;font-weight:bold;color:#111;letter-spacing:0.6px">Beitragssymbole:</div><div style="left:336px;top:847px;width:13px;height:13px;border-radius:50%;border:1px solid #a8a8a8;background:radial-gradient(#f4f4f4,#dcdcdc)"></div><div style="left:406px;top:847px;width:13px;height:13px;border-radius:50%;border:1px solid #a8a8a8;background:radial-gradient(#f4f4f4,#dcdcdc)"></div><div style="left:477px;top:847px;width:13px;height:13px;border-radius:50%;border:1px solid #a8a8a8;background:radial-gradient(#f4f4f4,#dcdcdc)"></div><div style="left:548px;top:847px;width:13px;height:13px;border-radius:50%;border:1px solid #a8a8a8;background:radial-gradient(#f4f4f4,#dcdcdc)"></div><div style="left:619px;top:847px;width:13px;height:13px;border-radius:50%;border:1px solid #a8a8a8;background:radial-gradient(#f4f4f4,#dcdcdc)"></div><div style="left:690px;top:847px;width:13px;height:13px;border-radius:50%;border:1px solid #a8a8a8;background:radial-gradient(#f4f4f4,#dcdcdc)"></div><div style="left:761px;top:847px;width:13px;height:13px;border-radius:50%;border:1px solid #a8a8a8;background:radial-gradient(#f4f4f4,#dcdcdc)"></div><div style="left:336px;top:870px;width:13px;height:13px;border-radius:50%;border:1px solid #a8a8a8;background:radial-gradient(#f4f4f4,#dcdcdc)"></div><div style="left:406px;top:870px;width:13px;height:13px;border-radius:50%;border:1px solid #a8a8a8;background:radial-gradient(#f4f4f4,#dcdcdc)"></div><div style="left:477px;top:870px;width:13px;height:13px;border-radius:50%;border:1px solid #a8a8a8;background:radial-gradient(#f4f4f4,#dcdcdc)"></div><div style="left:548px;top:870px;width:13px;height:13px;border-radius:50%;border:1px solid #a8a8a8;background:radial-gradient(#f4f4f4,#dcdcdc)"></div><div style="left:619px;top:870px;width:13px;height:13px;border-radius:50%;border:1px solid #a8a8a8;background:radial-gradient(#f4f4f4,#dcdcdc)"></div><div style="left:690px;top:870px;width:13px;height:13px;border-radius:50%;border:1px solid #a8a8a8;background:radial-gradient(#f4f4f4,#dcdcdc)"></div><div style="left:761px;top:870px;width:13px;height:13px;border-radius:50%;border:1px solid #a8a8a8;background:radial-gradient(#f4f4f4,#dcdcdc)"></div><svg style="left:353px;top:845px" width="15" height="17"><path d="M1.5 1.5 H10 L13.5 5 V15.5 H1.5Z" fill="#dbe9fb" stroke="#3a76c4"/><path d="M4 6 H11 M4 8.5 H11 M4 11 H11 M4 13.5 H11" stroke="#3a76c4"/></svg><svg style="left:422px;top:845px" width="16" height="16"><path d="M12.5 7 A5 5 0 1 1 8 3" stroke="#3e9a2e" stroke-width="3" fill="none"/><path d="M6 0 L11 3 L6 6Z" fill="#3e9a2e"/></svg><svg style="left:494px;top:844px" width="16" height="17"><circle cx="8" cy="7" r="6" fill="#fde48a" stroke="#d8a830"/><rect x="5" y="12" width="6" height="4" fill="#777"/></svg><svg style="left:564px;top:845px" width="16" height="16"><circle cx="8" cy="8" r="7" fill="#e8473d" stroke="#b52a22"/><rect x="7" y="3.5" width="2" height="6" fill="#fff"/><rect x="7" y="11" width="2" height="2" fill="#fff"/></svg><svg style="left:635px;top:845px" width="16" height="16"><circle cx="8" cy="8" r="7" fill="#5d8ed6" stroke="#3a67aa"/><text x="8" y="12" font-size="10" font-weight="bold" text-anchor="middle" fill="#fff" font-family="Liberation Sans">?</text></svg><svg style="left:706px;top:845px" width="17" height="17"><circle cx="8.5" cy="8.5" r="7.5" fill="#fcd04f" stroke="#d39a22"/><rect x="3" y="5" width="11" height="3.5" rx="1" fill="#222"/><path d="M5 11 Q8.5 14 12 11" stroke="#7a4a10" fill="none"/></svg><svg style="left:777px;top:845px" width="17" height="17"><circle cx="8.5" cy="8.5" r="7.5" fill="#fcd04f" stroke="#d39a22"/><circle cx="6" cy="6.5" r="1" fill="#7a4a10"/><circle cx="11" cy="6.5" r="1" fill="#7a4a10"/><path d="M5 10 Q8.5 13.5 12 10" stroke="#7a4a10" fill="none"/></svg><svg style="left:353px;top:868px" width="17" height="17"><circle cx="8.5" cy="8.5" r="7.5" fill="#f07a6a" stroke="#d39a22"/><path d="M4.5 6 L7 7 M12.5 6 L10 7" stroke="#8a1a10"/><path d="M5.5 12 Q8.5 9.5 11.5 12" stroke="#8a1a10" fill="none"/></svg><svg style="left:422px;top:868px" width="17" height="17"><circle cx="8.5" cy="8.5" r="7.5" fill="#fcd04f" stroke="#d39a22"/><path d="M5 6.5 H7 M10 6.5 H12" stroke="#7a4a10"/><path d="M5.5 12 Q8.5 10 11.5 12" stroke="#7a4a10" fill="none"/></svg><svg style="left:494px;top:868px" width="17" height="17"><circle cx="8.5" cy="8.5" r="7.5" fill="#fcd04f" stroke="#d39a22"/><path d="M4.5 9 Q8.5 15 12.5 9Z" fill="#fff" stroke="#7a4a10"/><circle cx="6" cy="6" r="1" fill="#7a4a10"/><circle cx="11" cy="6" r="1" fill="#7a4a10"/></svg><svg style="left:565px;top:868px" width="17" height="17"><circle cx="8.5" cy="8.5" r="7.5" fill="#fcd04f" stroke="#d39a22"/><path d="M5 6.5 Q6 5.5 7 6.5 M10 6.5 Q11 5.5 12 6.5" stroke="#7a4a10" fill="none"/><path d="M5 10 Q8.5 13.5 12 10" stroke="#7a4a10" fill="none"/></svg><svg style="left:636px;top:868px" width="17" height="17"><circle cx="8.5" cy="8.5" r="7.5" fill="#fcd04f" stroke="#d39a22"/><path d="M4.5 8.5 Q8.5 14 12.5 8.5Z" fill="#fff" stroke="#7a4a10"/><path d="M5 6 H7 M10 6 H12" stroke="#7a4a10"/></svg><svg style="left:706px;top:868px" width="17" height="17"><path d="M2 3 H10 Q11 3 11 5 L12 11 Q12 12 10 12 H8 L8 15 Q8 16 6.5 16 Q5 13 3 11 H2Z" fill="#f6c9b8" stroke="#d08a74"/><rect x="12.5" y="2" width="3" height="8" fill="#d4574a"/></svg><svg style="left:777px;top:868px" width="17" height="17"><path d="M2 14 H10 Q11 14 11 12 L12 7 Q12 6 10 6 H8 L8 3 Q8 1 6.5 1 Q5 4 3 7 H2Z" fill="#f6c9b8" stroke="#d08a74"/><rect x="12.5" y="7" width="3" height="8" fill="#5aaa48"/></svg><div style="left:336px;top:892px;width:13px;height:13px;border-radius:50%;border:1px solid #a8a8a8;background:radial-gradient(#f4f4f4,#dcdcdc)"></div><div style="left:340px;top:896px;width:5px;height:5px;border-radius:50%;background:#555"></div><div style="left:354px;top:893.00px;font-size:13px;line-height:13px;color:#111;letter-spacing:0.55px">Kein Symbol</div><div style="left:313px;top:918px;width:744px;height:1px;background:#7e94ab"></div><div style="left:313px;top:972px;width:744px;height:30px;background:linear-gradient(#2b5fa0,#1a4d8c);border-top:1px solid #9fb4d0"></div><div style="left:324px;top:978.84px;font-size:12px;line-height:12px;color:#fff;font-weight:bold;letter-spacing:0.72px">Zusätzliche Einstellungen</div><div style="left:1057px;top:616px;width:16px;height:400px;background:#f0f0f0"></div><svg style="left:1060px;top:622px" width="10" height="6"><path d="M0.5 5.5 L5 0.5 L9.5 5.5Z" fill="#505050"/></svg><div style="left:1059px;top:785px;width:12px;height:66px;background:#c1c1c1;border:1px solid #b0b0b0"></div><div style="left:1073px;top:616px;width:4px;height:400px;background:linear-gradient(90deg,#8a9ab8 0 1px,#b8c6e6 1px 3px,#4a5a78 3px)"></div><div style="left:280px;top:616px;width:4px;height:400px;background:linear-gradient(90deg,#4a5a78 0 1px,#b8c6e6 1px 3px,#8a9ab8 3px)"></div><div class="win" style="left:557px;top:56px;width:396px;height:215px;"></div><div style="left:560px;top:59px;width:390px;height:18px;background:linear-gradient(90deg,#808080,#c0c0c0)"></div><div style="left:562px;top:62.69px;font-size:11px;line-height:11px;font-weight:bold;color:#d4d0c8;letter-spacing:0.3px">K10stat</div><div class="raised tb" style="left:899px;top:61px;width:16px;height:14px;"><div style="left:3px;top:7px;width:6px;height:2px;background:#000"></div></div><div class="raised tb" style="left:915px;top:61px;width:16px;height:14px;"><div style="left:2px;top:1px;width:9px;height:9px;border:1px solid #808080;border-top-width:2px;box-shadow:1px 1px 0 #fff"></div></div><div class="raised tb" style="left:933px;top:61px;width:16px;height:14px;"><svg width="14" height="12" style="left:0;top:0"><path d="M3.5 2.5 L9.5 8.5 M9.5 2.5 L3.5 8.5" stroke="#000" stroke-width="1.6"/></svg></div><div style="left:566px;top:105px;width:379px;height:170px;border:1px solid;border-color:#fff #404040 #404040 #fff;box-shadow:inset -1px -1px 0 #808080"></div><div style="left:611px;top:87px;width:44px;height:19px;border:1px solid;border-color:#fff #404040 transparent #fff;box-shadow:inset -1px 0 0 #808080;border-radius:2px 2px 0 0;background:#d4d0c8"></div><div style="left:616px;top:91.69px;font-size:11px;line-height:11px;">P-state</div><div style="left:655px;top:87px;width:41px;height:19px;border:1px solid;border-color:#fff #404040 transparent #fff;box-shadow:inset -1px 0 0 #808080;border-radius:2px 2px 0 0;background:#d4d0c8"></div><div style="left:659px;top:91.69px;font-size:11px;line-height:11px;">NB</div><div style="left:697px;top:87px;width:41px;height:19px;border:1px solid;border-color:#fff #404040 transparent #fff;box-shadow:inset -1px 0 0 #808080;border-radius:2px 2px 0 0;background:#d4d0c8"></div><div style="left:702px;top:91.69px;font-size:11px;line-height:11px;">debug</div><div style="left:566px;top:85px;width:46px;height:22px;border:1px solid;border-color:#fff #404040 transparent #fff;box-shadow:inset -1px 0 0 #808080;border-radius:2px 2px 0 0;background:#d4d0c8"></div><div style="left:574px;top:89.69px;font-size:11px;line-height:11px;">Info</div><div style="right:642px;top:123.11px;font-size:10.5px;line-height:10.5px;">CPU Name</div><div style="right:642px;top:141.11px;font-size:10.5px;line-height:10.5px;">MaxCoreFreq</div><div style="right:642px;top:159.11px;font-size:10.5px;line-height:10.5px;">PowerPlane</div><div style="right:642px;top:177.11px;font-size:10.5px;line-height:10.5px;">Frequency</div><div style="right:642px;top:195.11px;font-size:10.5px;line-height:10.5px;">Voltage</div><div style="right:642px;top:212.11px;font-size:10.5px;line-height:10.5px;">CPU Load</div><div class="sunk" style="left:639px;top:120px;width:291px;height:15px;"></div><div style="left:584.5px;width:400px;text-align:center;top:123.11px;font-size:10.5px;line-height:10.5px;">AMD Phenom(tm) II X4 955 Processor</div><div class="sunk" style="left:639px;top:138px;width:37px;height:15px;"></div><div style="left:457.5px;width:400px;text-align:center;top:141.11px;font-size:10.5px;line-height:10.5px;">unlmit</div><div style="right:529px;top:141.11px;font-size:10.5px;line-height:10.5px;">MaxNB</div><div class="sunk" style="left:753px;top:138px;width:37px;height:15px;"></div><div style="left:571.5px;width:400px;text-align:center;top:141.11px;font-size:10.5px;line-height:10.5px;">unlmit</div><div style="left:803px;top:141.11px;font-size:10.5px;line-height:10.5px;">Voltage</div><div class="sunk" style="left:840px;top:138px;width:90px;height:15px;"></div><div style="left:685.0px;width:400px;text-align:center;top:141.11px;font-size:10.5px;line-height:10.5px;">unlimit</div><div class="sunk" style="left:639px;top:156px;width:37px;height:15px;"></div><div style="left:457.5px;width:400px;text-align:center;top:159.11px;font-size:10.5px;line-height:10.5px;">Dual</div><div style="right:529px;top:159.11px;font-size:10.5px;line-height:10.5px;">VID Interface</div><div class="sunk" style="left:753px;top:156px;width:37px;height:15px;"></div><div style="left:571.5px;width:400px;text-align:center;top:159.11px;font-size:10.5px;line-height:10.5px;">SVI</div><div style="left:803px;top:159.11px;font-size:10.5px;line-height:10.5px;">TSCf</div><div class="sunk" style="left:827px;top:156px;width:37px;height:15px;"></div><div style="left:830px;top:159.11px;font-size:10.5px;line-height:10.5px;">3214.0</div><div style="left:875px;top:159.11px;font-size:10.5px;line-height:10.5px;">Tctl</div><div class="sunk" style="left:893px;top:156px;width:37px;height:15px;"></div><div style="left:711.5px;width:400px;text-align:center;top:159.11px;font-size:10.5px;line-height:10.5px;">47.3</div><div class="sunk" style="left:639px;top:174px;width:37px;height:15px;"></div><div style="left:457.5px;width:400px;text-align:center;top:177.11px;font-size:10.5px;line-height:10.5px;">3200</div><div class="sunk" style="left:677px;top:174px;width:37px;height:15px;"></div><div style="left:495.5px;width:400px;text-align:center;top:177.11px;font-size:10.5px;line-height:10.5px;">3200</div><div class="sunk" style="left:714px;top:174px;width:38px;height:15px;"></div><div style="left:533.0px;width:400px;text-align:center;top:177.11px;font-size:10.5px;line-height:10.5px;">3200</div><div class="sunk" style="left:752px;top:174px;width:38px;height:15px;"></div><div style="left:571.0px;width:400px;text-align:center;top:177.11px;font-size:10.5px;line-height:10.5px;">3200</div><div class="sunk" style="left:893px;top:174px;width:37px;height:15px;"></div><div style="left:711.5px;width:400px;text-align:center;top:177.11px;font-size:10.5px;line-height:10.5px;">2000</div><div class="sunk" style="left:639px;top:192px;width:37px;height:15px;"></div><div style="left:457.5px;width:400px;text-align:center;top:195.11px;font-size:10.5px;line-height:10.5px;">1.3250</div><div class="sunk" style="left:677px;top:192px;width:37px;height:15px;"></div><div style="left:495.5px;width:400px;text-align:center;top:195.11px;font-size:10.5px;line-height:10.5px;">1.3250</div><div class="sunk" style="left:714px;top:192px;width:38px;height:15px;"></div><div style="left:533.0px;width:400px;text-align:center;top:195.11px;font-size:10.5px;line-height:10.5px;">1.3250</div><div class="sunk" style="left:752px;top:192px;width:38px;height:15px;"></div><div style="left:571.0px;width:400px;text-align:center;top:195.11px;font-size:10.5px;line-height:10.5px;">1.3250</div><div class="sunk" style="left:893px;top:192px;width:37px;height:15px;"></div><div style="left:711.5px;width:400px;text-align:center;top:195.11px;font-size:10.5px;line-height:10.5px;">1.1000</div><div class="sunk" style="left:639px;top:209px;width:37px;height:15px;"></div><div style="left:457.5px;width:400px;text-align:center;top:212.11px;font-size:10.5px;line-height:10.5px;">1%</div><div class="sunk" style="left:677px;top:209px;width:37px;height:15px;"></div><div style="left:495.5px;width:400px;text-align:center;top:212.11px;font-size:10.5px;line-height:10.5px;">1%</div><div class="sunk" style="left:714px;top:209px;width:38px;height:15px;"></div><div style="left:533.0px;width:400px;text-align:center;top:212.11px;font-size:10.5px;line-height:10.5px;">1%</div><div class="sunk" style="left:752px;top:209px;width:38px;height:15px;"></div><div style="left:571.0px;width:400px;text-align:center;top:212.11px;font-size:10.5px;line-height:10.5px;">2%</div><div class="sunk" style="left:848px;top:227px;width:82px;height:15px;"></div><div style="left:689.0px;width:400px;text-align:center;top:230.11px;font-size:10.5px;line-height:10.5px;">HT1000(16/16)</div><div style="left:580px;top:253px;width:350px;height:8px;border-top:1px solid #404040;box-shadow:inset 0 1px 0 #fff"></div><div style="left:681px;top:254px;width:1px;height:6px;background:#808080"></div><div style="left:730px;top:254px;width:1px;height:6px;background:#808080"></div><div style="left:910px;top:254px;width:1px;height:6px;background:#808080"></div><div class="win" style="left:556px;top:256px;width:415px;height:476px;"></div><div style="left:559px;top:259px;width:409px;height:18px;background:linear-gradient(90deg,#0a246a,#a6caf0)"></div><div style="left:560px;top:260px;width:17px;height:16px;background:#0b1530"></div><div style="left:579px;top:262.69px;font-size:11px;line-height:11px;font-weight:bold;color:#fff;letter-spacing:0.35px">SpeedFan 4.49</div><div class="raised tb" style="left:916px;top:261px;width:16px;height:14px;"><div style="left:3px;top:7px;width:6px;height:2px;background:#000"></div></div><div class="raised tb" style="left:932px;top:261px;width:16px;height:14px;"><div style="left:2px;top:1px;width:9px;height:9px;border:1px solid #808080;border-top-width:2px;box-shadow:1px 1px 0 #fff"></div></div><div class="raised tb" style="left:950px;top:261px;width:16px;height:14px;"><svg width="14" height="12" style="left:0;top:0"><path d="M3.5 2.5 L9.5 8.5 M9.5 2.5 L3.5 8.5" stroke="#000" stroke-width="1.6"/></svg></div><div style="left:560px;top:298px;width:408px;height:418px;border:1px solid;border-color:#fff #404040 #404040 #fff;box-shadow:inset -1px -1px 0 #808080"></div><div style="left:605px;top:280px;width:40px;height:19px;border:1px solid;border-color:#fff #404040 transparent #fff;box-shadow:inset -1px 0 0 #808080;border-radius:2px 2px 0 0;background:#d4d0c8"></div><div style="left:422.0px;width:400px;text-align:center;top:285.11px;font-size:10.5px;line-height:10.5px;">Takt</div><div style="left:645px;top:280px;width:76px;height:19px;border:1px solid;border-color:#fff #404040 transparent #fff;box-shadow:inset -1px 0 0 #808080;border-radius:2px 2px 0 0;background:#d4d0c8"></div><div style="left:483.0px;width:400px;text-align:center;top:285.11px;font-size:10.5px;line-height:10.5px;">Informationen</div><div style="left:721px;top:280px;width:51px;height:19px;border:1px solid;border-color:#fff #404040 transparent #fff;box-shadow:inset -1px 0 0 #808080;border-radius:2px 2px 0 0;background:#d4d0c8"></div><div style="left:546.5px;width:400px;text-align:center;top:285.11px;font-size:10.5px;line-height:10.5px;">Exotisch</div><div style="left:772px;top:280px;width:66px;height:19px;border:1px solid;border-color:#fff #404040 transparent #fff;box-shadow:inset -1px 0 0 #808080;border-radius:2px 2px 0 0;background:#d4d0c8"></div><div style="left:605.0px;width:400px;text-align:center;top:285.11px;font-size:10.5px;line-height:10.5px;">S.M.A.R.T.</div><div style="left:838px;top:280px;width:53px;height:19px;border:1px solid;border-color:#fff #404040 transparent #fff;box-shadow:inset -1px 0 0 #808080;border-radius:2px 2px 0 0;background:#d4d0c8"></div><div style="left:664.5px;width:400px;text-align:center;top:285.11px;font-size:10.5px;line-height:10.5px;">Graphen</div><div style="left:560px;top:278px;width:45px;height:22px;border:1px solid;border-color:#fff #404040 transparent #fff;box-shadow:inset -1px 0 0 #808080;border-radius:2px 2px 0 0;background:#d4d0c8"></div><div style="left:563px;top:281px;width:38px;height:16px;border:1px dotted #000"></div><div style="left:382px;width:400px;text-align:center;top:283.11px;font-size:10.5px;line-height:10.5px;">Lesen</div><div class="sunk2" style="left:567px;top:307px;width:291px;height:68px;background:#fff"></div><div style="left:570px;top:311.11px;font-size:10.5px;line-height:10.5px;">Found AMD Radeon HD 7800 Series</div><div style="left:570px;top:324.11px;font-size:10.5px;line-height:10.5px;">End of detection</div><div style="left:570px;top:337.11px;font-size:10.5px;line-height:10.5px;">Loaded 0 events</div><div style="left:841px;top:308px;width:16px;height:66px;background:repeating-conic-gradient(#d4d0c8 0 25%,#fff 0 50%) 0 0/2px 2px"></div><div class="raised" style="left:841px;top:308px;width:16px;height:16px;"></div><div class="raised" style="left:841px;top:357px;width:16px;height:16px;"></div><div class="raised" style="left:841px;top:350px;width:16px;height:7px;"></div><svg style="left:845px;top:313px" width="8" height="5"><path d="M0 4.5 L4 0.5 L8 4.5Z" fill="#000"/></svg><svg style="left:845px;top:362px" width="8" height="5"><path d="M0 0.5 L4 4.5 L8 0.5Z" fill="#000"/></svg><div style="left:865px;top:306px;width:95px;height:23px;border:1px solid #003c74;border-radius:3px;background:linear-gradient(#fff,#f4f4f0 60%,#e3e1d6);box-shadow:inset 0 -1px 0 #d6d0c5"></div><div style="left:712.5px;width:400px;text-align:center;top:312.61px;font-size:10.5px;line-height:10.5px;">Minimieren</div><div style="left:865px;top:334px;width:95px;height:23px;border:1px solid #003c74;border-radius:3px;background:linear-gradient(#fff,#f4f4f0 60%,#e3e1d6);box-shadow:inset 0 -1px 0 #d6d0c5"></div><div style="left:712.5px;width:400px;text-align:center;top:340.61px;font-size:10.5px;line-height:10.5px;">Konfigurieren</div><div style="left:867px;top:370px;width:14px;height:14px;background:#fff;border:1px solid #1c5180"></div><div style="left:885px;top:365.11px;font-size:10.5px;line-height:10.5px;">Automatische</div><div style="left:885px;top:377.11px;font-size:10.5px;line-height:10.5px;">Lüftergeschwi...</div><div style="left:567px;top:380.11px;font-size:10.5px;line-height:10.5px;">CPU Belastung</div><div style="left:648px;top:379px;width:42px;height:12px;border:1px solid #8f8f8f;border-radius:3px;background:#fff"></div><div style="left:692px;top:379px;width:42px;height:12px;border:1px solid #8f8f8f;border-radius:3px;background:#fff"></div><div style="left:736px;top:379px;width:42px;height:12px;border:1px solid #8f8f8f;border-radius:3px;background:#fff"></div><div style="left:780px;top:379px;width:42px;height:12px;border:1px solid #8f8f8f;border-radius:3px;background:#fff"></div><div style="left:827px;top:380.11px;font-size:10.5px;line-height:10.5px;">1,1%</div><div style="left:567px;top:394px;width:193px;height:153px;border:1px solid #808080"></div><div style="left:571px;top:400.11px;font-size:10.5px;line-height:10.5px;">Fan1:</div><div style="left:621px;top:400.11px;font-size:10.5px;line-height:10.5px;">825 RPM</div><div style="left:571px;top:416.11px;font-size:10.5px;line-height:10.5px;">Fan2:</div><div style="left:621px;top:416.11px;font-size:10.5px;line-height:10.5px;">2150 RPM</div><div style="left:571px;top:432.11px;font-size:10.5px;line-height:10.5px;">Fan3:</div><div style="left:621px;top:432.11px;font-size:10.5px;line-height:10.5px;">0 RPM</div><div style="left:571px;top:448.11px;font-size:10.5px;line-height:10.5px;">Fan4:</div><div style="left:621px;top:448.11px;font-size:10.5px;line-height:10.5px;">0 RPM</div><div style="left:571px;top:464.11px;font-size:10.5px;line-height:10.5px;">Fan5:</div><div style="left:621px;top:464.11px;font-size:10.5px;line-height:10.5px;">0 RPM</div><div style="left:571px;top:480.11px;font-size:10.5px;line-height:10.5px;">CPU:</div><div style="left:621px;top:480.11px;font-size:10.5px;line-height:10.5px;">825 RPM</div><div style="left:571px;top:496.11px;font-size:10.5px;line-height:10.5px;">Chassis:</div><div style="left:621px;top:496.11px;font-size:10.5px;line-height:10.5px;">2149 RPM</div><div style="left:571px;top:512.11px;font-size:10.5px;line-height:10.5px;">GPU Fan:</div><div style="left:621px;top:512.11px;font-size:10.5px;line-height:10.5px;">1329 RPM</div><div style="left:767px;top:394px;width:193px;height:153px;border:1px solid #808080"></div><svg style="left:771px;top:400px" width="14" height="11"><path d="M1 5.5 L5 9.5 L13 1" stroke="#1a8a1a" stroke-width="2.2" fill="none"/></svg><div style="left:787px;top:400.11px;font-size:10.5px;line-height:10.5px;">Temp1:</div><div style="left:825px;top:400.11px;font-size:10.5px;line-height:10.5px;">45C</div><svg style="left:774px;top:415px" width="9" height="13"><path d="M4.5 0 V11 M1 7.5 L4.5 11.5 L8 7.5" stroke="#1a2ad0" stroke-width="1.8" fill="none"/></svg><div style="left:787px;top:416.11px;font-size:10.5px;line-height:10.5px;">Temp2:</div><div style="left:825px;top:416.11px;font-size:10.5px;line-height:10.5px;">21C</div><svg style="left:774px;top:431px" width="9" height="13"><path d="M4.5 0 V11 M1 7.5 L4.5 11.5 L8 7.5" stroke="#1a2ad0" stroke-width="1.8" fill="none"/></svg><div style="left:787px;top:432.11px;font-size:10.5px;line-height:10.5px;">Temp3:</div><div style="left:825px;top:432.11px;font-size:10.5px;line-height:10.5px;">-128C</div><svg style="left:774px;top:447px" width="9" height="13"><path d="M4.5 0 V11 M1 7.5 L4.5 11.5 L8 7.5" stroke="#1a2ad0" stroke-width="1.8" fill="none"/></svg><div style="left:787px;top:448.11px;font-size:10.5px;line-height:10.5px;">HD0:</div><div style="left:825px;top:448.11px;font-size:10.5px;line-height:10.5px;">24C</div><svg style="left:771px;top:464px" width="14" height="11"><path d="M1 5.5 L5 9.5 L13 1" stroke="#1a8a1a" stroke-width="2.2" fill="none"/></svg><div style="left:787px;top:464.11px;font-size:10.5px;line-height:10.5px;">CPU:</div><div style="left:825px;top:464.11px;font-size:10.5px;line-height:10.5px;">45C</div><svg style="left:774px;top:479px" width="9" height="13"><path d="M4.5 0 V11 M1 7.5 L4.5 11.5 L8 7.5" stroke="#1a2ad0" stroke-width="1.8" fill="none"/></svg><div style="left:787px;top:480.11px;font-size:10.5px;line-height:10.5px;">MB:</div><div style="left:825px;top:480.11px;font-size:10.5px;line-height:10.5px;">21C</div><svg style="left:774px;top:495px" width="9" height="13"><path d="M4.5 0 V11 M1 7.5 L4.5 11.5 L8 7.5" stroke="#1a2ad0" stroke-width="1.8" fill="none"/></svg><div style="left:787px;top:496.11px;font-size:10.5px;line-height:10.5px;">GPU:</div><div style="left:825px;top:496.11px;font-size:10.5px;line-height:10.5px;">25C</div><svg style="left:771px;top:512px" width="14" height="11"><path d="M1 5.5 L5 9.5 L13 1" stroke="#1a8a1a" stroke-width="2.2" fill="none"/></svg><div style="left:787px;top:512.11px;font-size:10.5px;line-height:10.5px;">Core:</div><div style="left:825px;top:512.11px;font-size:10.5px;line-height:10.5px;">48C</div><div style="left:567px;top:555.11px;font-size:10.5px;line-height:10.5px;">Pwm1:</div><div style="left:616px;top:550px;width:49px;height:21px;background:#fff;border:1px solid;border-color:#808080 #fff #fff #808080;box-shadow:inset 1px 1px 0 #404040"></div><div style="left:619px;top:556.11px;font-size:10.5px;line-height:10.5px;">100</div><div style="left:645px;top:552px;width:19px;height:17px;background:#d4d0c8;border:1px solid #000"></div><svg style="left:645px;top:552px" width="19" height="17"><path d="M1 16 L18 1" stroke="#000" stroke-width="1"/><path d="M5.5 2 V9 M3 4.5 L5.5 2 L8 4.5 M12.5 8 V15 M10 12.5 L12.5 15 L15 12.5" stroke="#000" stroke-width="1.6" fill="none"/></svg><div style="left:668px;top:555.11px;font-size:10.5px;line-height:10.5px;">%</div><div style="left:567px;top:579.11px;font-size:10.5px;line-height:10.5px;">Pwm2:</div><div style="left:616px;top:574px;width:49px;height:21px;background:#fff;border:1px solid;border-color:#808080 #fff #fff #808080;box-shadow:inset 1px 1px 0 #404040"></div><div style="left:619px;top:580.11px;font-size:10.5px;line-height:10.5px;">100</div><div style="left:645px;top:576px;width:19px;height:17px;background:#d4d0c8;border:1px solid #000"></div><svg style="left:645px;top:576px" width="19" height="17"><path d="M1 16 L18 1" stroke="#000" stroke-width="1"/><path d="M5.5 2 V9 M3 4.5 L5.5 2 L8 4.5 M12.5 8 V15 M10 12.5 L12.5 15 L15 12.5" stroke="#000" stroke-width="1.6" fill="none"/></svg><div style="left:668px;top:579.11px;font-size:10.5px;line-height:10.5px;">%</div><div style="left:567px;top:603.11px;font-size:10.5px;line-height:10.5px;">Pwm3:</div><div style="left:616px;top:598px;width:49px;height:21px;background:#fff;border:1px solid;border-color:#808080 #fff #fff #808080;box-shadow:inset 1px 1px 0 #404040"></div><div style="left:619px;top:604.11px;font-size:10.5px;line-height:10.5px;">100</div><div style="left:645px;top:600px;width:19px;height:17px;background:#d4d0c8;border:1px solid #000"></div><svg style="left:645px;top:600px" width="19" height="17"><path d="M1 16 L18 1" stroke="#000" stroke-width="1"/><path d="M5.5 2 V9 M3 4.5 L5.5 2 L8 4.5 M12.5 8 V15 M10 12.5 L12.5 15 L15 12.5" stroke="#000" stroke-width="1.6" fill="none"/></svg><div style="left:668px;top:603.11px;font-size:10.5px;line-height:10.5px;">%</div><div style="left:767px;top:555.11px;font-size:10.5px;line-height:10.5px;">GPU Fan:</div><div style="left:816px;top:550px;width:49px;height:21px;background:#fff;border:1px solid;border-color:#808080 #fff #fff #808080;box-shadow:inset 1px 1px 0 #404040"></div><div style="left:819px;top:556.11px;font-size:10.5px;line-height:10.5px;">40</div><div style="left:845px;top:552px;width:19px;height:17px;background:#d4d0c8;border:1px solid #000"></div><svg style="left:845px;top:552px" width="19" height="17"><path d="M1 16 L18 1" stroke="#000" stroke-width="1"/><path d="M5.5 2 V9 M3 4.5 L5.5 2 L8 4.5 M12.5 8 V15 M10 12.5 L12.5 15 L15 12.5" stroke="#000" stroke-width="1.6" fill="none"/></svg><div style="left:868px;top:555.11px;font-size:10.5px;line-height:10.5px;">%</div><div style="left:567px;top:623px;width:393px;height:87px;border:1px solid #808080"></div><div style="left:694px;top:628px;width:2px;height:78px;border-left:1px solid #808080;border-right:1px solid #fff"></div><div style="left:821px;top:628px;width:2px;height:78px;border-left:1px solid #808080;border-right:1px solid #fff"></div><div style="left:571px;top:629.11px;font-size:10.5px;line-height:10.5px;">Vcore:</div><div style="right:616px;top:629.11px;font-size:10.5px;line-height:10.5px;">1,32V</div><div style="left:571px;top:645.11px;font-size:10.5px;line-height:10.5px;">+3.3V:</div><div style="right:616px;top:645.11px;font-size:10.5px;line-height:10.5px;">3,31V</div><div style="left:571px;top:661.11px;font-size:10.5px;line-height:10.5px;">+5V:</div><div style="right:616px;top:661.11px;font-size:10.5px;line-height:10.5px;">5,14V</div><div style="left:571px;top:677.11px;font-size:10.5px;line-height:10.5px;">+12V:</div><div style="right:616px;top:677.11px;font-size:10.5px;line-height:10.5px;">12,08V</div><div style="left:571px;top:693.11px;font-size:10.5px;line-height:10.5px;">GPU Vddc:</div><div style="right:616px;top:693.11px;font-size:10.5px;line-height:10.5px;">0,82V</div><div style="left:559px;top:716px;width:409px;height:15px;border-top:1px solid #808080;box-shadow:inset 0 1px 0 #fff"></div><div style="left:563px;width:400px;text-align:center;top:718.11px;font-size:10.5px;line-height:10.5px;">Programmiert von Alfredo Milani Comparetti - 2000-2013 - alfredo@almico.com</div><div style="left:1007px;top:5px;width:271px;height:252px;background:#141720;border-radius:3px;border:1px solid #0e1016"></div><div style="left:1008px;top:33px;width:269px;height:114px;background:#1b222d"></div><svg style="left:1017px;top:13px" width="14" height="14"><circle cx="7" cy="7" r="6" fill="#1b8ad0" stroke="#5cc8f8" stroke-width="1.2"/><path d="M9.5 4.8 A3.2 3.2 0 1 0 9.5 9.2" stroke="#fff" stroke-width="1.6" fill="none"/></svg><div style="left:1033px;top:12.84px;font-size:12px;line-height:12px;color:#c8ccd4">Leistungs-Monitor</div><div style="left:1027px;top:51px;width:41px;height:25px;background:#120f0c;border:1px solid #2a302c;border-bottom:none"></div><div style="left:1034px;top:51px;width:1px;height:24px;background:#2a302c"></div><div style="left:1044px;top:51px;width:1px;height:24px;background:#2a302c"></div><div style="left:1054px;top:51px;width:1px;height:24px;background:#2a302c"></div><div style="left:1064px;top:51px;width:1px;height:24px;background:#2a302c"></div><div style="left:1027px;top:56px;width:41px;height:1px;background:#2a302c"></div><div style="left:1027px;top:61px;width:41px;height:1px;background:#2a302c"></div><div style="left:1027px;top:66px;width:41px;height:1px;background:#2a302c"></div><div style="left:1027px;top:71px;width:41px;height:1px;background:#2a302c"></div><div style="left:1027px;top:70px;width:41px;height:6px;background:#1a6a9e;border-top:1px solid #26a4e6;border-bottom:1px solid #26a4e6"></div><div style="left:1160px;top:51px;width:41px;height:25px;background:#120f0c;border:1px solid #2a302c;border-bottom:none"></div><div style="left:1167px;top:51px;width:1px;height:24px;background:#2a302c"></div><div style="left:1177px;top:51px;width:1px;height:24px;background:#2a302c"></div><div style="left:1187px;top:51px;width:1px;height:24px;background:#2a302c"></div><div style="left:1197px;top:51px;width:1px;height:24px;background:#2a302c"></div><div style="left:1160px;top:56px;width:41px;height:1px;background:#2a302c"></div><div style="left:1160px;top:61px;width:41px;height:1px;background:#2a302c"></div><div style="left:1160px;top:66px;width:41px;height:1px;background:#2a302c"></div><div style="left:1160px;top:71px;width:41px;height:1px;background:#2a302c"></div><div style="left:1160px;top:74px;width:41px;height:2px;background:#22a0e4"></div><div style="left:1164px;top:73px;width:3px;height:1px;background:#22a0e4"></div><div style="left:1170px;top:73px;width:9px;height:1px;background:#22a0e4"></div><div style="left:1192px;top:73px;width:9px;height:1px;background:#22a0e4"></div><div style="left:1027px;top:99px;width:41px;height:25px;background:#120f0c;border:1px solid #2a302c;border-bottom:none"></div><div style="left:1034px;top:99px;width:1px;height:24px;background:#2a302c"></div><div style="left:1044px;top:99px;width:1px;height:24px;background:#2a302c"></div><div style="left:1054px;top:99px;width:1px;height:24px;background:#2a302c"></div><div style="left:1064px;top:99px;width:1px;height:24px;background:#2a302c"></div><div style="left:1027px;top:104px;width:41px;height:1px;background:#2a302c"></div><div style="left:1027px;top:109px;width:41px;height:1px;background:#2a302c"></div><div style="left:1027px;top:114px;width:41px;height:1px;background:#2a302c"></div><div style="left:1027px;top:119px;width:41px;height:1px;background:#2a302c"></div><div style="left:1027px;top:122px;width:41px;height:2px;background:#22a0e4"></div><div style="left:1030px;top:121px;width:3px;height:1px;background:#22a0e4"></div><div style="left:1043px;top:121px;width:3px;height:1px;background:#22a0e4"></div><div style="left:1061px;top:121px;width:3px;height:1px;background:#22a0e4"></div><div style="left:1160px;top:99px;width:41px;height:25px;background:#120f0c;border:1px solid #2a302c;border-bottom:none"></div><div style="left:1167px;top:99px;width:1px;height:24px;background:#2a302c"></div><div style="left:1177px;top:99px;width:1px;height:24px;background:#2a302c"></div><div style="left:1187px;top:99px;width:1px;height:24px;background:#2a302c"></div><div style="left:1197px;top:99px;width:1px;height:24px;background:#2a302c"></div><div style="left:1160px;top:104px;width:41px;height:1px;background:#2a302c"></div><div style="left:1160px;top:109px;width:41px;height:1px;background:#2a302c"></div><div style="left:1160px;top:114px;width:41px;height:1px;background:#2a302c"></div><div style="left:1160px;top:119px;width:41px;height:1px;background:#2a302c"></div><div style="left:1160px;top:122px;width:41px;height:2px;background:#22a0e4"></div><div style="left:1080px;top:52.69px;font-size:11px;line-height:11px;color:#b8bcc4">RAM: 17%</div><div style="left:1080px;top:67.53px;font-size:10px;line-height:10px;color:#b8bcc4;letter-spacing:-0.3px">2,77 / 16,00 GB</div><div style="left:1213px;top:52.27px;font-size:11.5px;line-height:11.5px;color:#b8bcc4">CPU:</div><div style="left:1213px;top:66.27px;font-size:11.5px;line-height:11.5px;color:#b8bcc4">1%</div><div style="left:1080px;top:100.27px;font-size:11.5px;line-height:11.5px;color:#b8bcc4">Festplatte</div><div style="left:1080px;top:114.27px;font-size:11.5px;line-height:11.5px;color:#b8bcc4">0%</div><div style="left:1213px;top:100.27px;font-size:11.5px;line-height:11.5px;color:#b8bcc4">Netzwerk</div><div style="left:1213px;top:114.27px;font-size:11.5px;line-height:11.5px;color:#b8bcc4">0,00%</div><svg style="left:1030px;top:163px" width="34" height="34"><circle cx="17" cy="17" r="15.5" fill="none" stroke="#4e5562" stroke-width="1.6"/><circle cx="15" cy="14" r="5.5" fill="none" stroke="#9aa0aa" stroke-width="1.5"/><path d="M19 18 L23 22" stroke="#9aa0aa" stroke-width="2"/></svg><div style="left:847px;width:400px;text-align:center;top:208.69px;font-size:11px;line-height:11px;color:#aeb2ba;letter-spacing:0.1px">Prüfen</div><svg style="left:1094px;top:163px" width="34" height="34"><circle cx="17" cy="17" r="15.5" fill="none" stroke="#4e5562" stroke-width="1.6"/><path d="M17 6 V13 M12 13 H22 L23 23 H11Z M14 17 V23 M17 16 V23 M20 17 V23" stroke="#9aa0aa" stroke-width="1.5" fill="none"/></svg><div style="left:911px;width:400px;text-align:center;top:208.69px;font-size:11px;line-height:11px;color:#aeb2ba;letter-spacing:0.1px">RAM-Putz</div><svg style="left:1157px;top:163px" width="34" height="34"><circle cx="17" cy="17" r="15.5" fill="none" stroke="#4e5562" stroke-width="1.6"/><path d="M10 10 H22 V22 H10Z" stroke="#9aa0aa" stroke-width="1.5" fill="none" stroke-dasharray="2.5 1.5"/><path d="M22 17 V25 M18 21 H26" stroke="#9aa0aa" stroke-width="1.8"/></svg><div style="left:974px;width:400px;text-align:center;top:208.69px;font-size:11px;line-height:11px;color:#aeb2ba;letter-spacing:0.1px">Abbildung</div><svg style="left:1221px;top:163px" width="34" height="34"><circle cx="17" cy="17" r="15.5" fill="none" stroke="#4e5562" stroke-width="1.6"/><path d="M12.5 10 A6.5 6.5 0 1 0 21.5 10" stroke="#9aa0aa" stroke-width="2" fill="none"/><path d="M17 7 V15" stroke="#9aa0aa" stroke-width="2"/><path d="M19 18 L23 18 L21 21Z" fill="#9aa0aa"/></svg><div style="left:1038px;width:400px;text-align:center;top:208.69px;font-size:11px;line-height:11px;color:#aeb2ba;letter-spacing:0.1px">Betrieb</div><svg style="left:1028px;top:232px" width="17" height="17"><circle cx="8.5" cy="8.5" r="8" fill="#262c36"/><path d="M9.5 14 V8 H11.5 M8 9 H11.5 M9.5 8 Q9.5 5 12 5" stroke="#8a9098" stroke-width="1.8" fill="none"/></svg><svg style="left:1053px;top:232px" width="17" height="17"><circle cx="8.5" cy="8.5" r="8" fill="#262c36"/><circle cx="8.5" cy="8.5" r="5" fill="#8a9098"/><rect x="7.5" y="8" width="2" height="4" fill="#262c36"/><circle cx="8.5" cy="6" r="1" fill="#262c36"/></svg><div style="left:0px;top:996px;width:1280px;height:28px;background:#d4d0c8;border-top:1px solid #d4d0c8;box-shadow:inset 0 1px 0 #fff"></div><div class="raised" style="left:2px;top:1000px;width:52px;height:22px;"></div><svg style="left:5px;top:1003px" width="17" height="16"><path d="M1 3 Q4 1 8 2.5 L7 8 Q4 6.5 1 8Z" fill="#f05a28"/><path d="M9 2.5 Q12 4 16 2 L15 7.5 Q12 9 8 7.5Z" fill="#7cbb3a"/><path d="M1 9 Q4 7.5 7 9 L6 14.5 Q3 13 0 14.5Z" fill="#2a9ae0"/><path d="M8 9 Q11 10.5 15 8.5 L14 14 Q11 15.5 7 14Z" fill="#fcb818"/></svg><div style="left:21px;top:1004.84px;font-size:12px;line-height:12px;font-weight:bold;color:#000;letter-spacing:0.2px">Start</div><div style="left:61px;top:1002px;width:2px;height:18px;border-left:1px solid #808080;border-right:1px solid #fff"></div><div class="raised" style="left:140px;top:1000px;width:32px;height:22px;"></div><div class="raised" style="left:650px;top:1000px;width:32px;height:22px;"></div><div class="raised" style="left:684px;top:1000px;width:32px;height:22px;"></div><div style="left:718px;top:1000px;width:32px;height:22px;border:1px solid;border-color:#404040 #fff #fff #404040;box-shadow:inset 1px 1px 0 #808080;background:#fff"></div><svg style="left:80px;top:1003px" width="16" height="16" viewBox="0 0 16 16"><circle cx="8.5" cy="9" r="6.5" fill="#3aa8ec"/><path d="M5 8 Q5.5 5 8.5 5 Q11.5 5 12 8Z" fill="#fff"/><path d="M4.5 10.5 H13.5 Q12.5 14 9 14 Q5.5 14 4.5 10.5Z" fill="#fff"/><path d="M5.5 11 H12.5 Q11.5 13 9 13 Q6.5 13 5.5 11Z" fill="#3aa8ec"/><path d="M2 15 Q0 12 5 7 Q10 2 14 1.5 Q16 2 14.5 5" stroke="#f0c030" stroke-width="1.4" fill="none"/></svg><svg style="left:113px;top:1003px" width="16" height="16" viewBox="0 0 16 16"><path d="M1 4 H6 L7 5 H15 V14 H1Z" fill="#f2cf6a"/><path d="M1 7 H15 V14 H1Z" fill="#f8e08e"/><path d="M6 9 H10 V14 H9 V11 H7 V14 H6Z" fill="#2a7ad0"/></svg><svg style="left:148px;top:1003px" width="16" height="16" viewBox="0 0 16 16"><circle cx="8" cy="8" r="7.5" fill="#db4437"/><path d="M8 8 L14.5 11.8 A7.5 7.5 0 0 1 1.5 11.8Z" fill="#0f9d58"/><path d="M8 8 V0.5 A7.5 7.5 0 0 1 14.5 11.8Z" fill="#f4c20d"/><circle cx="8" cy="8" r="3.6" fill="#fff"/><circle cx="8" cy="8" r="2.8" fill="#4285f4"/></svg><svg style="left:182px;top:1003px" width="16" height="16" viewBox="0 0 16 16"><rect x="3" y="2" width="11" height="13" fill="#cfe4f8" stroke="#6a90b8"/><path d="M5 5 H12 M5 7.5 H12 M5 10 H12 M5 12.5 H12" stroke="#8ab0d0"/></svg><svg style="left:216px;top:1003px" width="16" height="16" viewBox="0 0 16 16"><circle cx="9" cy="8" r="6.5" fill="#d8dce0" stroke="#6a7480"/><path d="M6 4 Q12 6 10 14" stroke="#5a6470" stroke-width="1.5" fill="none"/><circle cx="4" cy="10" r="2.5" fill="#3a9a5a"/></svg><svg style="left:250px;top:1003px" width="16" height="16" viewBox="0 0 16 16"><rect x="1" y="1" width="14" height="14" fill="#5a2aa8"/><text x="8" y="13" font-size="12" font-weight="bold" font-style="italic" fill="#fff" text-anchor="middle" font-family="Liberation Sans">3</text></svg><svg style="left:284px;top:1003px" width="16" height="16" viewBox="0 0 16 16"><path d="M8 1 L15 8 L8 15 L1 8Z" fill="#e8a830" stroke="#6a4a10"/><path d="M4 11 L12 5" stroke="#fff" stroke-width="2"/></svg><svg style="left:318px;top:1003px" width="16" height="16" viewBox="0 0 16 16"><circle cx="8" cy="8" r="7" fill="#e86a1a"/><circle cx="9" cy="7" r="4.5" fill="#3a5ab8"/><path d="M2 6 Q4 14 12 14 Q6 12 5 6Z" fill="#f89a2a"/></svg><svg style="left:352px;top:1003px" width="16" height="16" viewBox="0 0 16 16"><rect x="1.5" y="1.5" width="13" height="13" rx="2" fill="#e8f0f8" stroke="#4a8ad0"/><path d="M6 4.5 L11.5 8 L6 11.5Z" fill="#f0a020"/></svg><svg style="left:386px;top:1003px" width="16" height="16" viewBox="0 0 16 16"><rect x="1" y="1" width="14" height="14" rx="3" fill="#f0a040"/><circle cx="7" cy="7" r="4" fill="none" stroke="#fff" stroke-width="1.2"/><circle cx="11.5" cy="11.5" r="3.8" fill="#3ab04a" stroke="#fff" stroke-width=".8"/></svg><svg style="left:420px;top:1003px" width="16" height="16" viewBox="0 0 16 16"><rect x="1" y="1" width="14" height="14" rx="2" fill="#fff"/><rect x="2" y="2" width="12" height="12" rx="1" fill="#f05a1a"/><path d="M5 4 H11 L6 12 H11" stroke="#222" stroke-width="1.6" fill="none"/></svg><svg style="left:454px;top:1003px" width="16" height="16" viewBox="0 0 16 16"><circle cx="8" cy="8" r="7.5" fill="#1a3a70"/><path d="M0.5 7 L5 9.5 L11 6" stroke="#fff" stroke-width="2" fill="none"/><circle cx="10.5" cy="5.5" r="3" fill="#fff"/><circle cx="10.5" cy="5.5" r="1.6" fill="#1a3a70"/></svg><svg style="left:488px;top:1003px" width="16" height="16" viewBox="0 0 16 16"><circle cx="8" cy="8" r="7.5" fill="#5a4a20"/><circle cx="8" cy="8" r="6" fill="#2a2418"/><text x="8" y="12" font-size="10" font-weight="bold" fill="#e8c060" text-anchor="middle" font-family="Liberation Serif">W</text></svg><svg style="left:522px;top:1003px" width="16" height="16" viewBox="0 0 16 16"><rect x="1" y="1" width="14" height="14" fill="#1a2a48" stroke="#b89840"/><text x="8" y="13" font-size="12" font-weight="bold" fill="#d8b850" text-anchor="middle" font-family="Liberation Serif">L</text></svg><svg style="left:556px;top:1003px" width="16" height="16" viewBox="0 0 16 16"><circle cx="8" cy="8" r="7.5" fill="#5a4a20"/><circle cx="8" cy="8" r="6" fill="#2a2418"/><text x="8" y="12" font-size="10" font-weight="bold" fill="#e8c060" text-anchor="middle" font-family="Liberation Serif">W</text></svg><svg style="left:590px;top:1003px" width="16" height="16" viewBox="0 0 16 16"><circle cx="8" cy="8" r="7.5" fill="#d42020"/><circle cx="8" cy="8" r="4.5" fill="#222"/><circle cx="8" cy="8" r="2.5" fill="#fff"/></svg><svg style="left:624px;top:1003px" width="16" height="16" viewBox="0 0 16 16"><circle cx="8" cy="8" r="7.5" fill="#1a70d0"/><circle cx="8" cy="8" r="4" fill="#0a2040"/><circle cx="11" cy="5" r="3.5" fill="#3a9ae8"/></svg><svg style="left:658px;top:1003px" width="16" height="16" viewBox="0 0 16 16"><circle cx="8" cy="8" r="7.5" fill="#b42020"/><circle cx="8" cy="8" r="6" fill="#d8d0c8"/><circle cx="8" cy="8" r="5" fill="#c02828"/><path d="M6 14 Q5 9 7 7 Q7 3 9 3 Q11 5 10 8 Q12 11 11 14Z" fill="#7a1010"/></svg><svg style="left:692px;top:1003px" width="16" height="16" viewBox="0 0 16 16"><rect x="0" y="0" width="16" height="16" fill="#fff"/><rect x="1" y="1" width="6" height="6" fill="#0000f0"/><rect x="9" y="1" width="6" height="6" fill="#0000f0"/><rect x="1" y="9" width="6" height="6" fill="#0000f0"/><rect x="9" y="9" width="6" height="6" fill="#0000f0"/></svg><svg style="left:726px;top:1003px" width="16" height="16" viewBox="0 0 16 16"><rect x="0" y="0" width="16" height="16" fill="#0a1020"/><path d="M8 2 L9 7 L14 4 L9.5 9 L13 13 L8 10 L4 14 L6.5 8.5 L2 5 L7 7Z" fill="#c8d8f0" opacity=".85"/></svg><div style="left:842px;top:1002px;width:2px;height:18px;border-left:1px solid #808080;border-right:1px solid #fff"></div><div style="left:852px;top:1005.69px;font-size:11px;line-height:11px;color:#000">DE</div><div style="left:874px;top:1002px;width:2px;height:18px;border-left:1px solid #808080;border-right:1px solid #fff"></div><div style="left:877px;top:1000px;width:401px;height:22px;border:1px solid;border-color:#808080 #fff #fff #808080"></div><div style="left:690px;width:400px;text-align:center;top:1005.69px;font-size:11px;line-height:11px;color:#1a1ab8">45</div><div style="left:714px;width:400px;text-align:center;top:1005.69px;font-size:11px;line-height:11px;color:#1a1ab8">45</div><svg style="left:931px;top:1003px" width="16" height="16" viewBox="0 0 16 16"><circle cx="8" cy="8" r="7.5" fill="#1a70d0"/><circle cx="8" cy="8" r="4" fill="#0a2040"/><circle cx="9.5" cy="6.5" r="3" fill="#5ab0f8"/></svg><svg style="left:955px;top:1003px" width="16" height="16" viewBox="0 0 16 16"><rect x="0.5" y="0.5" width="15" height="15" fill="#8a0a0a"/><path d="M8 0 V16 M0 8 H16" stroke="#d4d0c8" stroke-width="1.2"/></svg><div style="left:787px;width:400px;text-align:center;top:1005.69px;font-size:11px;line-height:11px;color:#e8d040">48</div><div style="left:810px;width:400px;text-align:center;top:1005.69px;font-size:11px;line-height:11px;color:#3ab0e8">48</div><div style="left:834px;width:400px;text-align:center;top:1005.69px;font-size:11px;line-height:11px;color:#3ad070">48</div><div style="left:858px;width:400px;text-align:center;top:1005.69px;font-size:11px;line-height:11px;color:#50d030">48</div><svg style="left:1074px;top:1003px" width="16" height="16" viewBox="0 0 16 16"><ellipse cx="8" cy="9" rx="4" ry="3.5" fill="#d82828"/><path d="M1 5 L5 8 M15 4 L11 7 M2 13 L5 10 M14 13 L11 10" stroke="#888"/></svg><svg style="left:1098px;top:1003px" width="16" height="16" viewBox="0 0 16 16"><path d="M2 6 H5 L9 2 V14 L5 10 H2Z" fill="#e8e8e8" stroke="#666"/><path d="M11 5 Q13 8 11 11 M13 3 Q16 8 13 13" stroke="#666" fill="none"/></svg><svg style="left:1122px;top:1003px" width="16" height="16" viewBox="0 0 16 16"><path d="M1 6 L8 4 L15 6 V13 L8 15 L1 13Z" fill="#2a6ad0"/><path d="M1 6 L8 8 L15 6 V9 L8 11 L1 9Z" fill="#c83030"/><circle cx="4" cy="3" r="3" fill="#d82020"/><rect x="2" y="2.4" width="4" height="1.2" fill="#fff"/></svg><svg style="left:1146px;top:1003px" width="16" height="16" viewBox="0 0 16 16"><circle cx="8" cy="8" r="7.5" fill="#f08a10"/><circle cx="8" cy="8" r="4" fill="#fff"/><circle cx="6" cy="11" r="4" fill="#d82020"/><path d="M4.5 9.5 L7.5 12.5 M7.5 9.5 L4.5 12.5" stroke="#fff" stroke-width="1.2"/></svg><svg style="left:1170px;top:1003px" width="16" height="16" viewBox="0 0 16 16"><path d="M3 1 V15" stroke="#555"/><path d="M3 2 Q8 0 13 3 V9 Q8 6 3 8Z" fill="#fff" stroke="#777"/><circle cx="11.5" cy="11.5" r="4" fill="#e82020"/><path d="M9.8 9.8 L13.2 13.2 M13.2 9.8 L9.8 13.2" stroke="#fff" stroke-width="1.2"/></svg><svg style="left:1194px;top:1003px" width="16" height="16" viewBox="0 0 16 16"><rect x="5" y="4" width="10" height="9" fill="#e8e8e8" stroke="#555"/><rect x="1" y="1" width="5" height="6" fill="#ddd" stroke="#555"/><path d="M4 13 V15 H14" stroke="#555"/></svg><div style="left:1038px;width:400px;text-align:center;top:1005.69px;font-size:11px;line-height:11px;color:#000">11:03</div><svg style="left:1259px;top:1003px" width="16" height="16" viewBox="0 0 16 16"><rect x="1" y="2" width="14" height="11" fill="#1a5ab0" stroke="#3a6aa0"/><path d="M2 11 H14" stroke="#5aa0e8"/><rect x="5" y="13" width="6" height="2" fill="#555"/></svg></body></html>
